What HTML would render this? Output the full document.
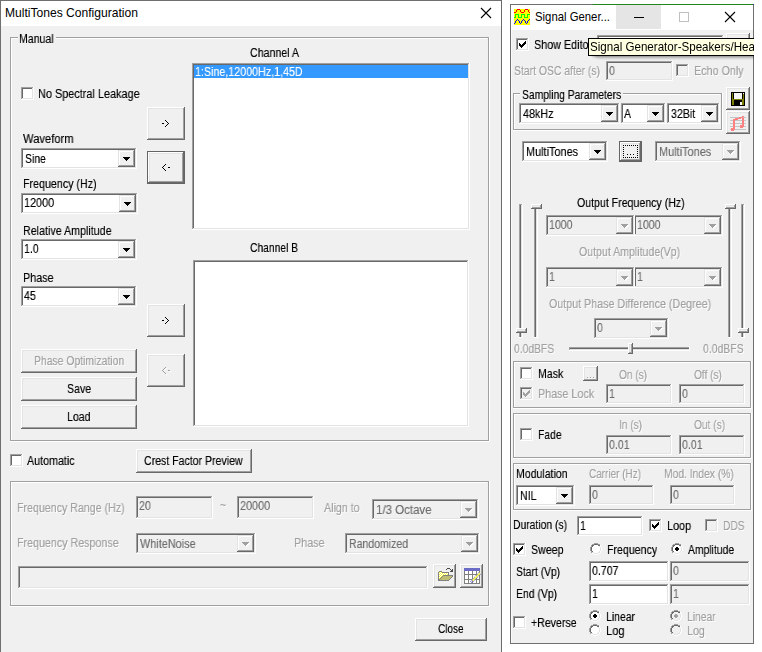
<!DOCTYPE html>
<html><head><meta charset="utf-8"><title>MultiTones Configuration</title>
<style>
html,body{margin:0;padding:0;background:#fff;}
body{width:762px;height:652px;overflow:hidden;position:relative;font-family:"Liberation Sans",sans-serif;}
#r{position:absolute;left:0;top:0;width:762px;height:652px;overflow:hidden;}
#r div,#r span,#r svg{position:absolute;}
#r span{white-space:pre;display:block;transform-origin:0 0;}
#r span.g{will-change:transform;}
</style></head><body><div id="r">
<div style="left:0px;top:0px;width:502px;height:652px;background:#f0f0f0;"></div>
<div style="left:0px;top:0px;width:502px;height:26px;background:#ffffff;"></div>
<div style="left:0px;top:0px;width:502px;height:1px;background:#707070;"></div>
<div style="left:0px;top:0px;width:1px;height:652px;background:#707070;"></div>
<div style="left:501px;top:0px;width:1px;height:652px;background:#6a6a6a;"></div>
<span style="left:5.00px;top:5px;line-height:15px;height:15px;font-size:13px;color:#000;transform:scaleX(0.9293);">MultiTones Configuration</span>
<svg style="left:480px;top:7px" width="12" height="12" viewBox="0 0 12 12"><path d="M1 1L11 11M11 1L1 11" stroke="#000" stroke-width="1.1" fill="none"/></svg>
<div style="left:10px;top:37px;width:1px;height:404px;background:#a0a0a0;"></div>
<div style="left:11px;top:38px;width:1px;height:402px;background:#ffffff;"></div>
<div style="left:10px;top:440px;width:479px;height:1px;background:#a0a0a0;"></div>
<div style="left:10px;top:441px;width:480px;height:1px;background:#ffffff;"></div>
<div style="left:488px;top:37px;width:1px;height:404px;background:#a0a0a0;"></div>
<div style="left:489px;top:37px;width:1px;height:405px;background:#ffffff;"></div>
<div style="left:10px;top:37px;width:8px;height:1px;background:#a0a0a0;"></div>
<div style="left:11px;top:38px;width:7px;height:1px;background:#ffffff;"></div>
<div style="left:56px;top:37px;width:433px;height:1px;background:#a0a0a0;"></div>
<div style="left:56px;top:38px;width:431px;height:1px;background:#ffffff;"></div>
<span class="g" style="left:19.40px;top:32px;line-height:14px;height:14px;font-size:12px;color:#000;transform:scaleX(0.8791);text-shadow:0 0 0 rgba(0,0,0,.5);">Manual</span>
<div style="left:23px;top:89px;width:9px;height:9px;background:#ffffff;"></div>
<div style="left:21px;top:87px;width:12px;height:1px;background:#a0a0a0;"></div>
<div style="left:21px;top:87px;width:1px;height:12px;background:#a0a0a0;"></div>
<div style="left:21px;top:99px;width:13px;height:1px;background:#ffffff;"></div>
<div style="left:33px;top:87px;width:1px;height:13px;background:#ffffff;"></div>
<div style="left:22px;top:88px;width:10px;height:1px;background:#696969;"></div>
<div style="left:22px;top:88px;width:1px;height:10px;background:#696969;"></div>
<div style="left:22px;top:98px;width:11px;height:1px;background:#e3e3e3;"></div>
<div style="left:32px;top:88px;width:1px;height:11px;background:#e3e3e3;"></div>
<span class="g" style="left:38.40px;top:87px;line-height:14px;height:14px;font-size:12px;color:#000;transform:scaleX(0.9068);text-shadow:0 0 0 rgba(0,0,0,.5);">No Spectral Leakage</span>
<span class="g" style="left:23.40px;top:132px;line-height:14px;height:14px;font-size:12px;color:#000;transform:scaleX(0.9330);text-shadow:0 0 0 rgba(0,0,0,.5);">Waveform</span>
<div style="left:23px;top:150px;width:112px;height:17px;background:#ffffff;"></div>
<div style="left:21px;top:148px;width:115px;height:1px;background:#a0a0a0;"></div>
<div style="left:21px;top:148px;width:1px;height:20px;background:#a0a0a0;"></div>
<div style="left:21px;top:168px;width:116px;height:1px;background:#ffffff;"></div>
<div style="left:136px;top:148px;width:1px;height:21px;background:#ffffff;"></div>
<div style="left:22px;top:149px;width:113px;height:1px;background:#696969;"></div>
<div style="left:22px;top:149px;width:1px;height:18px;background:#696969;"></div>
<div style="left:22px;top:167px;width:114px;height:1px;background:#e3e3e3;"></div>
<div style="left:135px;top:149px;width:1px;height:19px;background:#e3e3e3;"></div>
<div style="left:118px;top:150px;width:17px;height:17px;background:#f0f0f0;"></div>
<div style="left:118px;top:150px;width:16px;height:1px;background:#e3e3e3;"></div>
<div style="left:118px;top:150px;width:1px;height:16px;background:#e3e3e3;"></div>
<div style="left:118px;top:166px;width:17px;height:1px;background:#696969;"></div>
<div style="left:134px;top:150px;width:1px;height:17px;background:#696969;"></div>
<div style="left:119px;top:151px;width:14px;height:1px;background:#ffffff;"></div>
<div style="left:119px;top:151px;width:1px;height:14px;background:#ffffff;"></div>
<div style="left:119px;top:165px;width:15px;height:1px;background:#a0a0a0;"></div>
<div style="left:133px;top:151px;width:1px;height:15px;background:#a0a0a0;"></div>
<div style="left:123px;top:157px;width:7px;height:1px;background:#000;"></div>
<div style="left:124px;top:158px;width:5px;height:1px;background:#000;"></div>
<div style="left:125px;top:159px;width:3px;height:1px;background:#000;"></div>
<div style="left:126px;top:160px;width:1px;height:1px;background:#000;"></div>
<span class="g" style="left:25.40px;top:152px;line-height:14px;height:14px;font-size:12px;color:#000;transform:scaleX(0.8703);text-shadow:0 0 0 rgba(0,0,0,.5);">Sine</span>
<span class="g" style="left:23.40px;top:177px;line-height:14px;height:14px;font-size:12px;color:#000;transform:scaleX(0.8901);text-shadow:0 0 0 rgba(0,0,0,.5);">Frequency (Hz)</span>
<div style="left:23px;top:195px;width:113px;height:17px;background:#ffffff;"></div>
<div style="left:21px;top:193px;width:116px;height:1px;background:#a0a0a0;"></div>
<div style="left:21px;top:193px;width:1px;height:20px;background:#a0a0a0;"></div>
<div style="left:21px;top:213px;width:117px;height:1px;background:#ffffff;"></div>
<div style="left:137px;top:193px;width:1px;height:21px;background:#ffffff;"></div>
<div style="left:22px;top:194px;width:114px;height:1px;background:#696969;"></div>
<div style="left:22px;top:194px;width:1px;height:18px;background:#696969;"></div>
<div style="left:22px;top:212px;width:115px;height:1px;background:#e3e3e3;"></div>
<div style="left:136px;top:194px;width:1px;height:19px;background:#e3e3e3;"></div>
<div style="left:119px;top:195px;width:17px;height:17px;background:#f0f0f0;"></div>
<div style="left:119px;top:195px;width:16px;height:1px;background:#e3e3e3;"></div>
<div style="left:119px;top:195px;width:1px;height:16px;background:#e3e3e3;"></div>
<div style="left:119px;top:211px;width:17px;height:1px;background:#696969;"></div>
<div style="left:135px;top:195px;width:1px;height:17px;background:#696969;"></div>
<div style="left:120px;top:196px;width:14px;height:1px;background:#ffffff;"></div>
<div style="left:120px;top:196px;width:1px;height:14px;background:#ffffff;"></div>
<div style="left:120px;top:210px;width:15px;height:1px;background:#a0a0a0;"></div>
<div style="left:134px;top:196px;width:1px;height:15px;background:#a0a0a0;"></div>
<div style="left:124px;top:202px;width:7px;height:1px;background:#000;"></div>
<div style="left:125px;top:203px;width:5px;height:1px;background:#000;"></div>
<div style="left:126px;top:204px;width:3px;height:1px;background:#000;"></div>
<div style="left:127px;top:205px;width:1px;height:1px;background:#000;"></div>
<span class="g" style="left:24.40px;top:196px;line-height:14px;height:14px;font-size:12px;color:#000;transform:scaleX(0.9023);text-shadow:0 0 0 rgba(0,0,0,.5);">12000</span>
<span class="g" style="left:23.40px;top:224px;line-height:14px;height:14px;font-size:12px;color:#000;transform:scaleX(0.8914);text-shadow:0 0 0 rgba(0,0,0,.5);">Relative Amplitude</span>
<div style="left:23px;top:241px;width:112px;height:17px;background:#ffffff;"></div>
<div style="left:21px;top:239px;width:115px;height:1px;background:#a0a0a0;"></div>
<div style="left:21px;top:239px;width:1px;height:20px;background:#a0a0a0;"></div>
<div style="left:21px;top:259px;width:116px;height:1px;background:#ffffff;"></div>
<div style="left:136px;top:239px;width:1px;height:21px;background:#ffffff;"></div>
<div style="left:22px;top:240px;width:113px;height:1px;background:#696969;"></div>
<div style="left:22px;top:240px;width:1px;height:18px;background:#696969;"></div>
<div style="left:22px;top:258px;width:114px;height:1px;background:#e3e3e3;"></div>
<div style="left:135px;top:240px;width:1px;height:19px;background:#e3e3e3;"></div>
<div style="left:118px;top:241px;width:17px;height:17px;background:#f0f0f0;"></div>
<div style="left:118px;top:241px;width:16px;height:1px;background:#e3e3e3;"></div>
<div style="left:118px;top:241px;width:1px;height:16px;background:#e3e3e3;"></div>
<div style="left:118px;top:257px;width:17px;height:1px;background:#696969;"></div>
<div style="left:134px;top:241px;width:1px;height:17px;background:#696969;"></div>
<div style="left:119px;top:242px;width:14px;height:1px;background:#ffffff;"></div>
<div style="left:119px;top:242px;width:1px;height:14px;background:#ffffff;"></div>
<div style="left:119px;top:256px;width:15px;height:1px;background:#a0a0a0;"></div>
<div style="left:133px;top:242px;width:1px;height:15px;background:#a0a0a0;"></div>
<div style="left:123px;top:248px;width:7px;height:1px;background:#000;"></div>
<div style="left:124px;top:249px;width:5px;height:1px;background:#000;"></div>
<div style="left:125px;top:250px;width:3px;height:1px;background:#000;"></div>
<div style="left:126px;top:251px;width:1px;height:1px;background:#000;"></div>
<span class="g" style="left:24.40px;top:242px;line-height:14px;height:14px;font-size:12px;color:#000;transform:scaleX(0.8800);text-shadow:0 0 0 rgba(0,0,0,.5);">1.0</span>
<span class="g" style="left:23.40px;top:271px;line-height:14px;height:14px;font-size:12px;color:#000;transform:scaleX(0.8996);text-shadow:0 0 0 rgba(0,0,0,.5);">Phase</span>
<div style="left:23px;top:288px;width:112px;height:17px;background:#ffffff;"></div>
<div style="left:21px;top:286px;width:115px;height:1px;background:#a0a0a0;"></div>
<div style="left:21px;top:286px;width:1px;height:20px;background:#a0a0a0;"></div>
<div style="left:21px;top:306px;width:116px;height:1px;background:#ffffff;"></div>
<div style="left:136px;top:286px;width:1px;height:21px;background:#ffffff;"></div>
<div style="left:22px;top:287px;width:113px;height:1px;background:#696969;"></div>
<div style="left:22px;top:287px;width:1px;height:18px;background:#696969;"></div>
<div style="left:22px;top:305px;width:114px;height:1px;background:#e3e3e3;"></div>
<div style="left:135px;top:287px;width:1px;height:19px;background:#e3e3e3;"></div>
<div style="left:118px;top:288px;width:17px;height:17px;background:#f0f0f0;"></div>
<div style="left:118px;top:288px;width:16px;height:1px;background:#e3e3e3;"></div>
<div style="left:118px;top:288px;width:1px;height:16px;background:#e3e3e3;"></div>
<div style="left:118px;top:304px;width:17px;height:1px;background:#696969;"></div>
<div style="left:134px;top:288px;width:1px;height:17px;background:#696969;"></div>
<div style="left:119px;top:289px;width:14px;height:1px;background:#ffffff;"></div>
<div style="left:119px;top:289px;width:1px;height:14px;background:#ffffff;"></div>
<div style="left:119px;top:303px;width:15px;height:1px;background:#a0a0a0;"></div>
<div style="left:133px;top:289px;width:1px;height:15px;background:#a0a0a0;"></div>
<div style="left:123px;top:295px;width:7px;height:1px;background:#000;"></div>
<div style="left:124px;top:296px;width:5px;height:1px;background:#000;"></div>
<div style="left:125px;top:297px;width:3px;height:1px;background:#000;"></div>
<div style="left:126px;top:298px;width:1px;height:1px;background:#000;"></div>
<span class="g" style="left:24.40px;top:289px;line-height:14px;height:14px;font-size:12px;color:#000;transform:scaleX(0.8800);text-shadow:0 0 0 rgba(0,0,0,.5);">45</span>
<div style="left:147px;top:107px;width:38px;height:33px;background:#f0f0f0;"></div>
<div style="left:147px;top:107px;width:37px;height:1px;background:#ffffff;"></div>
<div style="left:147px;top:107px;width:1px;height:32px;background:#ffffff;"></div>
<div style="left:147px;top:139px;width:38px;height:1px;background:#696969;"></div>
<div style="left:184px;top:107px;width:1px;height:33px;background:#696969;"></div>
<div style="left:148px;top:108px;width:35px;height:1px;background:#e3e3e3;"></div>
<div style="left:148px;top:108px;width:1px;height:30px;background:#e3e3e3;"></div>
<div style="left:148px;top:138px;width:36px;height:1px;background:#a0a0a0;"></div>
<div style="left:183px;top:108px;width:1px;height:31px;background:#a0a0a0;"></div>
<svg style="left:162px;top:120px" width="7" height="7" viewBox="0 0 7 7" shape-rendering="crispEdges"><rect x="3" y="0" width="1" height="1" fill="#000"/><rect x="4" y="1" width="1" height="1" fill="#000"/><rect x="5" y="2" width="1" height="1" fill="#000"/><rect x="0" y="3" width="2" height="1" fill="#000"/><rect x="6" y="3" width="1" height="1" fill="#000"/><rect x="5" y="4" width="1" height="1" fill="#000"/><rect x="4" y="5" width="1" height="1" fill="#000"/><rect x="3" y="6" width="1" height="1" fill="#000"/></svg>
<div style="left:147px;top:151px;width:37px;height:1px;background:#646464;"></div>
<div style="left:147px;top:151px;width:1px;height:32px;background:#646464;"></div>
<div style="left:147px;top:183px;width:38px;height:1px;background:#646464;"></div>
<div style="left:184px;top:151px;width:1px;height:33px;background:#646464;"></div>
<div style="left:148px;top:152px;width:36px;height:31px;background:#f0f0f0;"></div>
<div style="left:148px;top:152px;width:35px;height:1px;background:#ffffff;"></div>
<div style="left:148px;top:152px;width:1px;height:30px;background:#ffffff;"></div>
<div style="left:148px;top:182px;width:36px;height:1px;background:#696969;"></div>
<div style="left:183px;top:152px;width:1px;height:31px;background:#696969;"></div>
<div style="left:149px;top:153px;width:33px;height:1px;background:#e3e3e3;"></div>
<div style="left:149px;top:153px;width:1px;height:28px;background:#e3e3e3;"></div>
<div style="left:149px;top:181px;width:34px;height:1px;background:#a0a0a0;"></div>
<div style="left:182px;top:153px;width:1px;height:29px;background:#a0a0a0;"></div>
<svg style="left:162px;top:164px" width="8" height="7" viewBox="0 0 8 7" shape-rendering="crispEdges"><rect x="3" y="0" width="1" height="1" fill="#000"/><rect x="2" y="1" width="1" height="1" fill="#000"/><rect x="1" y="2" width="1" height="1" fill="#000"/><rect x="0" y="3" width="1" height="1" fill="#000"/><rect x="6" y="3" width="2" height="1" fill="#000"/><rect x="1" y="4" width="1" height="1" fill="#000"/><rect x="2" y="5" width="1" height="1" fill="#000"/><rect x="3" y="6" width="1" height="1" fill="#000"/></svg>
<div style="left:147px;top:304px;width:38px;height:33px;background:#f0f0f0;"></div>
<div style="left:147px;top:304px;width:37px;height:1px;background:#ffffff;"></div>
<div style="left:147px;top:304px;width:1px;height:32px;background:#ffffff;"></div>
<div style="left:147px;top:336px;width:38px;height:1px;background:#696969;"></div>
<div style="left:184px;top:304px;width:1px;height:33px;background:#696969;"></div>
<div style="left:148px;top:305px;width:35px;height:1px;background:#e3e3e3;"></div>
<div style="left:148px;top:305px;width:1px;height:30px;background:#e3e3e3;"></div>
<div style="left:148px;top:335px;width:36px;height:1px;background:#a0a0a0;"></div>
<div style="left:183px;top:305px;width:1px;height:31px;background:#a0a0a0;"></div>
<svg style="left:162px;top:317px" width="7" height="7" viewBox="0 0 7 7" shape-rendering="crispEdges"><rect x="3" y="0" width="1" height="1" fill="#000"/><rect x="4" y="1" width="1" height="1" fill="#000"/><rect x="5" y="2" width="1" height="1" fill="#000"/><rect x="0" y="3" width="2" height="1" fill="#000"/><rect x="6" y="3" width="1" height="1" fill="#000"/><rect x="5" y="4" width="1" height="1" fill="#000"/><rect x="4" y="5" width="1" height="1" fill="#000"/><rect x="3" y="6" width="1" height="1" fill="#000"/></svg>
<div style="left:147px;top:354px;width:38px;height:33px;background:#f0f0f0;"></div>
<div style="left:147px;top:354px;width:37px;height:1px;background:#ffffff;"></div>
<div style="left:147px;top:354px;width:1px;height:32px;background:#ffffff;"></div>
<div style="left:147px;top:386px;width:38px;height:1px;background:#696969;"></div>
<div style="left:184px;top:354px;width:1px;height:33px;background:#696969;"></div>
<div style="left:148px;top:355px;width:35px;height:1px;background:#e3e3e3;"></div>
<div style="left:148px;top:355px;width:1px;height:30px;background:#e3e3e3;"></div>
<div style="left:148px;top:385px;width:36px;height:1px;background:#a0a0a0;"></div>
<div style="left:183px;top:355px;width:1px;height:31px;background:#a0a0a0;"></div>
<svg style="left:163px;top:368px" width="8" height="7" viewBox="0 0 8 7" shape-rendering="crispEdges"><rect x="3" y="0" width="1" height="1" fill="#ffffff"/><rect x="2" y="1" width="1" height="1" fill="#ffffff"/><rect x="1" y="2" width="1" height="1" fill="#ffffff"/><rect x="0" y="3" width="1" height="1" fill="#ffffff"/><rect x="6" y="3" width="2" height="1" fill="#ffffff"/><rect x="1" y="4" width="1" height="1" fill="#ffffff"/><rect x="2" y="5" width="1" height="1" fill="#ffffff"/><rect x="3" y="6" width="1" height="1" fill="#ffffff"/></svg>
<svg style="left:162px;top:367px" width="8" height="7" viewBox="0 0 8 7" shape-rendering="crispEdges"><rect x="3" y="0" width="1" height="1" fill="#a0a0a0"/><rect x="2" y="1" width="1" height="1" fill="#a0a0a0"/><rect x="1" y="2" width="1" height="1" fill="#a0a0a0"/><rect x="0" y="3" width="1" height="1" fill="#a0a0a0"/><rect x="6" y="3" width="2" height="1" fill="#a0a0a0"/><rect x="1" y="4" width="1" height="1" fill="#a0a0a0"/><rect x="2" y="5" width="1" height="1" fill="#a0a0a0"/><rect x="3" y="6" width="1" height="1" fill="#a0a0a0"/></svg>
<div style="left:21px;top:349px;width:116px;height:24px;background:#f0f0f0;"></div>
<div style="left:21px;top:349px;width:115px;height:1px;background:#ffffff;"></div>
<div style="left:21px;top:349px;width:1px;height:23px;background:#ffffff;"></div>
<div style="left:21px;top:372px;width:116px;height:1px;background:#696969;"></div>
<div style="left:136px;top:349px;width:1px;height:24px;background:#696969;"></div>
<div style="left:22px;top:350px;width:113px;height:1px;background:#e3e3e3;"></div>
<div style="left:22px;top:350px;width:1px;height:21px;background:#e3e3e3;"></div>
<div style="left:22px;top:371px;width:114px;height:1px;background:#a0a0a0;"></div>
<div style="left:135px;top:350px;width:1px;height:22px;background:#a0a0a0;"></div>
<span class="g" style="left:33.90px;top:354px;line-height:14px;height:14px;font-size:12px;color:#a0a0a0;transform:scaleX(0.8661);text-shadow:0 0 0 rgba(160,160,160,.5),1px 1px 0 #fff;">Phase Optimization</span>
<div style="left:21px;top:377px;width:116px;height:24px;background:#f0f0f0;"></div>
<div style="left:21px;top:377px;width:115px;height:1px;background:#ffffff;"></div>
<div style="left:21px;top:377px;width:1px;height:23px;background:#ffffff;"></div>
<div style="left:21px;top:400px;width:116px;height:1px;background:#696969;"></div>
<div style="left:136px;top:377px;width:1px;height:24px;background:#696969;"></div>
<div style="left:22px;top:378px;width:113px;height:1px;background:#e3e3e3;"></div>
<div style="left:22px;top:378px;width:1px;height:21px;background:#e3e3e3;"></div>
<div style="left:22px;top:399px;width:114px;height:1px;background:#a0a0a0;"></div>
<div style="left:135px;top:378px;width:1px;height:22px;background:#a0a0a0;"></div>
<span class="g" style="left:66.97px;top:382px;line-height:14px;height:14px;font-size:12px;color:#000;transform:scaleX(0.8800);text-shadow:0 0 0 rgba(0,0,0,.5);">Save</span>
<div style="left:21px;top:405px;width:116px;height:24px;background:#f0f0f0;"></div>
<div style="left:21px;top:405px;width:115px;height:1px;background:#ffffff;"></div>
<div style="left:21px;top:405px;width:1px;height:23px;background:#ffffff;"></div>
<div style="left:21px;top:428px;width:116px;height:1px;background:#696969;"></div>
<div style="left:136px;top:405px;width:1px;height:24px;background:#696969;"></div>
<div style="left:22px;top:406px;width:113px;height:1px;background:#e3e3e3;"></div>
<div style="left:22px;top:406px;width:1px;height:21px;background:#e3e3e3;"></div>
<div style="left:22px;top:427px;width:114px;height:1px;background:#a0a0a0;"></div>
<div style="left:135px;top:406px;width:1px;height:22px;background:#a0a0a0;"></div>
<span class="g" style="left:67.26px;top:410px;line-height:14px;height:14px;font-size:12px;color:#000;transform:scaleX(0.8800);text-shadow:0 0 0 rgba(0,0,0,.5);">Load</span>
<span class="g" style="left:249.90px;top:46px;line-height:14px;height:14px;font-size:12px;color:#000;transform:scaleX(0.8867);text-shadow:0 0 0 rgba(0,0,0,.5);">Channel A</span>
<div style="left:194px;top:65px;width:274px;height:163px;background:#ffffff;"></div>
<div style="left:192px;top:63px;width:277px;height:1px;background:#a0a0a0;"></div>
<div style="left:192px;top:63px;width:1px;height:166px;background:#a0a0a0;"></div>
<div style="left:192px;top:229px;width:278px;height:1px;background:#ffffff;"></div>
<div style="left:469px;top:63px;width:1px;height:167px;background:#ffffff;"></div>
<div style="left:193px;top:64px;width:275px;height:1px;background:#696969;"></div>
<div style="left:193px;top:64px;width:1px;height:164px;background:#696969;"></div>
<div style="left:193px;top:228px;width:276px;height:1px;background:#e3e3e3;"></div>
<div style="left:468px;top:64px;width:1px;height:165px;background:#e3e3e3;"></div>
<div style="left:194px;top:65px;width:274px;height:13px;background:#3399ff;"></div>
<span class="g" style="left:195.40px;top:65px;line-height:14px;height:14px;font-size:12px;color:#fff;transform:scaleX(0.8913);text-shadow:0 0 0 rgba(255,255,255,.5);">1:Sine,12000Hz,1,45D</span>
<span class="g" style="left:249.90px;top:241px;line-height:14px;height:14px;font-size:12px;color:#000;transform:scaleX(0.8584);text-shadow:0 0 0 rgba(0,0,0,.5);">Channel B</span>
<div style="left:195px;top:262px;width:272px;height:163px;background:#ffffff;"></div>
<div style="left:193px;top:260px;width:275px;height:1px;background:#a0a0a0;"></div>
<div style="left:193px;top:260px;width:1px;height:166px;background:#a0a0a0;"></div>
<div style="left:193px;top:426px;width:276px;height:1px;background:#ffffff;"></div>
<div style="left:468px;top:260px;width:1px;height:167px;background:#ffffff;"></div>
<div style="left:194px;top:261px;width:273px;height:1px;background:#696969;"></div>
<div style="left:194px;top:261px;width:1px;height:164px;background:#696969;"></div>
<div style="left:194px;top:425px;width:274px;height:1px;background:#e3e3e3;"></div>
<div style="left:467px;top:261px;width:1px;height:165px;background:#e3e3e3;"></div>
<div style="left:12px;top:456px;width:9px;height:9px;background:#ffffff;"></div>
<div style="left:10px;top:454px;width:12px;height:1px;background:#a0a0a0;"></div>
<div style="left:10px;top:454px;width:1px;height:12px;background:#a0a0a0;"></div>
<div style="left:10px;top:466px;width:13px;height:1px;background:#ffffff;"></div>
<div style="left:22px;top:454px;width:1px;height:13px;background:#ffffff;"></div>
<div style="left:11px;top:455px;width:10px;height:1px;background:#696969;"></div>
<div style="left:11px;top:455px;width:1px;height:10px;background:#696969;"></div>
<div style="left:11px;top:465px;width:11px;height:1px;background:#e3e3e3;"></div>
<div style="left:21px;top:455px;width:1px;height:11px;background:#e3e3e3;"></div>
<span class="g" style="left:27.40px;top:454px;line-height:14px;height:14px;font-size:12px;color:#000;transform:scaleX(0.8923);text-shadow:0 0 0 rgba(0,0,0,.5);">Automatic</span>
<div style="left:136px;top:449px;width:116px;height:24px;background:#f0f0f0;"></div>
<div style="left:136px;top:449px;width:115px;height:1px;background:#ffffff;"></div>
<div style="left:136px;top:449px;width:1px;height:23px;background:#ffffff;"></div>
<div style="left:136px;top:472px;width:116px;height:1px;background:#696969;"></div>
<div style="left:251px;top:449px;width:1px;height:24px;background:#696969;"></div>
<div style="left:137px;top:450px;width:113px;height:1px;background:#e3e3e3;"></div>
<div style="left:137px;top:450px;width:1px;height:21px;background:#e3e3e3;"></div>
<div style="left:137px;top:471px;width:114px;height:1px;background:#a0a0a0;"></div>
<div style="left:250px;top:450px;width:1px;height:22px;background:#a0a0a0;"></div>
<span class="g" style="left:144.40px;top:454px;line-height:14px;height:14px;font-size:12px;color:#000;transform:scaleX(0.8802);text-shadow:0 0 0 rgba(0,0,0,.5);">Crest Factor Preview</span>
<div style="left:10px;top:481px;width:1px;height:125px;background:#a0a0a0;"></div>
<div style="left:11px;top:482px;width:1px;height:123px;background:#ffffff;"></div>
<div style="left:10px;top:605px;width:479px;height:1px;background:#a0a0a0;"></div>
<div style="left:10px;top:606px;width:480px;height:1px;background:#ffffff;"></div>
<div style="left:488px;top:481px;width:1px;height:125px;background:#a0a0a0;"></div>
<div style="left:489px;top:481px;width:1px;height:126px;background:#ffffff;"></div>
<div style="left:10px;top:481px;width:479px;height:1px;background:#a0a0a0;"></div>
<div style="left:11px;top:482px;width:476px;height:1px;background:#ffffff;"></div>
<span class="g" style="left:17.40px;top:501px;line-height:14px;height:14px;font-size:12px;color:#a0a0a0;transform:scaleX(0.8865);text-shadow:0 0 0 rgba(160,160,160,.5),1px 1px 0 #fff;">Frequency Range (Hz)</span>
<div style="left:138px;top:498px;width:73px;height:19px;background:#f0f0f0;"></div>
<div style="left:136px;top:496px;width:76px;height:1px;background:#a0a0a0;"></div>
<div style="left:136px;top:496px;width:1px;height:22px;background:#a0a0a0;"></div>
<div style="left:136px;top:518px;width:77px;height:1px;background:#ffffff;"></div>
<div style="left:212px;top:496px;width:1px;height:23px;background:#ffffff;"></div>
<div style="left:137px;top:497px;width:74px;height:1px;background:#696969;"></div>
<div style="left:137px;top:497px;width:1px;height:20px;background:#696969;"></div>
<div style="left:137px;top:517px;width:75px;height:1px;background:#e3e3e3;"></div>
<div style="left:211px;top:497px;width:1px;height:21px;background:#e3e3e3;"></div>
<span class="g" style="left:139.40px;top:499px;line-height:14px;height:14px;font-size:12px;color:#6d6d6d;transform:scaleX(0.8800);text-shadow:0 0 0 rgba(109,109,109,.5);">20</span>
<span class="g" style="left:219.90px;top:498px;line-height:14px;height:14px;font-size:12px;color:#a0a0a0;transform:scaleX(0.8800);text-shadow:0 0 0 rgba(160,160,160,.5),1px 1px 0 #fff;">~</span>
<div style="left:239px;top:498px;width:73px;height:19px;background:#f0f0f0;"></div>
<div style="left:237px;top:496px;width:76px;height:1px;background:#a0a0a0;"></div>
<div style="left:237px;top:496px;width:1px;height:22px;background:#a0a0a0;"></div>
<div style="left:237px;top:518px;width:77px;height:1px;background:#ffffff;"></div>
<div style="left:313px;top:496px;width:1px;height:23px;background:#ffffff;"></div>
<div style="left:238px;top:497px;width:74px;height:1px;background:#696969;"></div>
<div style="left:238px;top:497px;width:1px;height:20px;background:#696969;"></div>
<div style="left:238px;top:517px;width:75px;height:1px;background:#e3e3e3;"></div>
<div style="left:312px;top:497px;width:1px;height:21px;background:#e3e3e3;"></div>
<span class="g" style="left:240.40px;top:499px;line-height:14px;height:14px;font-size:12px;color:#6d6d6d;transform:scaleX(0.9023);text-shadow:0 0 0 rgba(109,109,109,.5);">20000</span>
<span class="g" style="left:324.40px;top:501px;line-height:14px;height:14px;font-size:12px;color:#a0a0a0;transform:scaleX(0.8897);text-shadow:0 0 0 rgba(160,160,160,.5),1px 1px 0 #fff;">Align to</span>
<div style="left:374px;top:501px;width:103px;height:17px;background:#f0f0f0;"></div>
<div style="left:372px;top:499px;width:106px;height:1px;background:#a0a0a0;"></div>
<div style="left:372px;top:499px;width:1px;height:20px;background:#a0a0a0;"></div>
<div style="left:372px;top:519px;width:107px;height:1px;background:#ffffff;"></div>
<div style="left:478px;top:499px;width:1px;height:21px;background:#ffffff;"></div>
<div style="left:373px;top:500px;width:104px;height:1px;background:#696969;"></div>
<div style="left:373px;top:500px;width:1px;height:18px;background:#696969;"></div>
<div style="left:373px;top:518px;width:105px;height:1px;background:#e3e3e3;"></div>
<div style="left:477px;top:500px;width:1px;height:19px;background:#e3e3e3;"></div>
<div style="left:460px;top:501px;width:17px;height:17px;background:#f0f0f0;"></div>
<div style="left:460px;top:501px;width:16px;height:1px;background:#e3e3e3;"></div>
<div style="left:460px;top:501px;width:1px;height:16px;background:#e3e3e3;"></div>
<div style="left:460px;top:517px;width:17px;height:1px;background:#696969;"></div>
<div style="left:476px;top:501px;width:1px;height:17px;background:#696969;"></div>
<div style="left:461px;top:502px;width:14px;height:1px;background:#ffffff;"></div>
<div style="left:461px;top:502px;width:1px;height:14px;background:#ffffff;"></div>
<div style="left:461px;top:516px;width:15px;height:1px;background:#a0a0a0;"></div>
<div style="left:475px;top:502px;width:1px;height:15px;background:#a0a0a0;"></div>
<div style="left:466px;top:509px;width:7px;height:1px;background:#ffffff;"></div>
<div style="left:467px;top:510px;width:5px;height:1px;background:#ffffff;"></div>
<div style="left:468px;top:511px;width:3px;height:1px;background:#ffffff;"></div>
<div style="left:469px;top:512px;width:1px;height:1px;background:#ffffff;"></div>
<div style="left:465px;top:508px;width:7px;height:1px;background:#a0a0a0;"></div>
<div style="left:466px;top:509px;width:5px;height:1px;background:#a0a0a0;"></div>
<div style="left:467px;top:510px;width:3px;height:1px;background:#a0a0a0;"></div>
<div style="left:468px;top:511px;width:1px;height:1px;background:#a0a0a0;"></div>
<span class="g" style="left:375.90px;top:503px;line-height:14px;height:14px;font-size:12px;color:#6d6d6d;transform:scaleX(0.9586);text-shadow:0 0 0 rgba(109,109,109,.5);">1/3 Octave</span>
<span class="g" style="left:17.40px;top:536px;line-height:14px;height:14px;font-size:12px;color:#a0a0a0;transform:scaleX(0.8909);text-shadow:0 0 0 rgba(160,160,160,.5),1px 1px 0 #fff;">Frequency Response</span>
<div style="left:138px;top:535px;width:116px;height:17px;background:#f0f0f0;"></div>
<div style="left:136px;top:533px;width:119px;height:1px;background:#a0a0a0;"></div>
<div style="left:136px;top:533px;width:1px;height:20px;background:#a0a0a0;"></div>
<div style="left:136px;top:553px;width:120px;height:1px;background:#ffffff;"></div>
<div style="left:255px;top:533px;width:1px;height:21px;background:#ffffff;"></div>
<div style="left:137px;top:534px;width:117px;height:1px;background:#696969;"></div>
<div style="left:137px;top:534px;width:1px;height:18px;background:#696969;"></div>
<div style="left:137px;top:552px;width:118px;height:1px;background:#e3e3e3;"></div>
<div style="left:254px;top:534px;width:1px;height:19px;background:#e3e3e3;"></div>
<div style="left:237px;top:535px;width:17px;height:17px;background:#f0f0f0;"></div>
<div style="left:237px;top:535px;width:16px;height:1px;background:#e3e3e3;"></div>
<div style="left:237px;top:535px;width:1px;height:16px;background:#e3e3e3;"></div>
<div style="left:237px;top:551px;width:17px;height:1px;background:#696969;"></div>
<div style="left:253px;top:535px;width:1px;height:17px;background:#696969;"></div>
<div style="left:238px;top:536px;width:14px;height:1px;background:#ffffff;"></div>
<div style="left:238px;top:536px;width:1px;height:14px;background:#ffffff;"></div>
<div style="left:238px;top:550px;width:15px;height:1px;background:#a0a0a0;"></div>
<div style="left:252px;top:536px;width:1px;height:15px;background:#a0a0a0;"></div>
<div style="left:243px;top:543px;width:7px;height:1px;background:#ffffff;"></div>
<div style="left:244px;top:544px;width:5px;height:1px;background:#ffffff;"></div>
<div style="left:245px;top:545px;width:3px;height:1px;background:#ffffff;"></div>
<div style="left:246px;top:546px;width:1px;height:1px;background:#ffffff;"></div>
<div style="left:242px;top:542px;width:7px;height:1px;background:#a0a0a0;"></div>
<div style="left:243px;top:543px;width:5px;height:1px;background:#a0a0a0;"></div>
<div style="left:244px;top:544px;width:3px;height:1px;background:#a0a0a0;"></div>
<div style="left:245px;top:545px;width:1px;height:1px;background:#a0a0a0;"></div>
<span class="g" style="left:139.90px;top:537px;line-height:14px;height:14px;font-size:12px;color:#6d6d6d;transform:scaleX(0.9061);text-shadow:0 0 0 rgba(109,109,109,.5);">WhiteNoise</span>
<span class="g" style="left:294.40px;top:536px;line-height:14px;height:14px;font-size:12px;color:#a0a0a0;transform:scaleX(0.8996);text-shadow:0 0 0 rgba(160,160,160,.5),1px 1px 0 #fff;">Phase</span>
<div style="left:347px;top:535px;width:131px;height:17px;background:#f0f0f0;"></div>
<div style="left:345px;top:533px;width:134px;height:1px;background:#a0a0a0;"></div>
<div style="left:345px;top:533px;width:1px;height:20px;background:#a0a0a0;"></div>
<div style="left:345px;top:553px;width:135px;height:1px;background:#ffffff;"></div>
<div style="left:479px;top:533px;width:1px;height:21px;background:#ffffff;"></div>
<div style="left:346px;top:534px;width:132px;height:1px;background:#696969;"></div>
<div style="left:346px;top:534px;width:1px;height:18px;background:#696969;"></div>
<div style="left:346px;top:552px;width:133px;height:1px;background:#e3e3e3;"></div>
<div style="left:478px;top:534px;width:1px;height:19px;background:#e3e3e3;"></div>
<div style="left:461px;top:535px;width:17px;height:17px;background:#f0f0f0;"></div>
<div style="left:461px;top:535px;width:16px;height:1px;background:#e3e3e3;"></div>
<div style="left:461px;top:535px;width:1px;height:16px;background:#e3e3e3;"></div>
<div style="left:461px;top:551px;width:17px;height:1px;background:#696969;"></div>
<div style="left:477px;top:535px;width:1px;height:17px;background:#696969;"></div>
<div style="left:462px;top:536px;width:14px;height:1px;background:#ffffff;"></div>
<div style="left:462px;top:536px;width:1px;height:14px;background:#ffffff;"></div>
<div style="left:462px;top:550px;width:15px;height:1px;background:#a0a0a0;"></div>
<div style="left:476px;top:536px;width:1px;height:15px;background:#a0a0a0;"></div>
<div style="left:467px;top:543px;width:7px;height:1px;background:#ffffff;"></div>
<div style="left:468px;top:544px;width:5px;height:1px;background:#ffffff;"></div>
<div style="left:469px;top:545px;width:3px;height:1px;background:#ffffff;"></div>
<div style="left:470px;top:546px;width:1px;height:1px;background:#ffffff;"></div>
<div style="left:466px;top:542px;width:7px;height:1px;background:#a0a0a0;"></div>
<div style="left:467px;top:543px;width:5px;height:1px;background:#a0a0a0;"></div>
<div style="left:468px;top:544px;width:3px;height:1px;background:#a0a0a0;"></div>
<div style="left:469px;top:545px;width:1px;height:1px;background:#a0a0a0;"></div>
<span class="g" style="left:348.90px;top:537px;line-height:14px;height:14px;font-size:12px;color:#6d6d6d;transform:scaleX(0.8772);text-shadow:0 0 0 rgba(109,109,109,.5);">Randomized</span>
<div style="left:20px;top:568px;width:406px;height:19px;background:#f0f0f0;"></div>
<div style="left:18px;top:566px;width:409px;height:1px;background:#a0a0a0;"></div>
<div style="left:18px;top:566px;width:1px;height:22px;background:#a0a0a0;"></div>
<div style="left:18px;top:588px;width:410px;height:1px;background:#ffffff;"></div>
<div style="left:427px;top:566px;width:1px;height:23px;background:#ffffff;"></div>
<div style="left:19px;top:567px;width:407px;height:1px;background:#696969;"></div>
<div style="left:19px;top:567px;width:1px;height:20px;background:#696969;"></div>
<div style="left:19px;top:587px;width:408px;height:1px;background:#e3e3e3;"></div>
<div style="left:426px;top:567px;width:1px;height:21px;background:#e3e3e3;"></div>
<div style="left:433px;top:564px;width:23px;height:24px;background:#f0f0f0;"></div>
<div style="left:433px;top:564px;width:22px;height:1px;background:#ffffff;"></div>
<div style="left:433px;top:564px;width:1px;height:23px;background:#ffffff;"></div>
<div style="left:433px;top:587px;width:23px;height:1px;background:#696969;"></div>
<div style="left:455px;top:564px;width:1px;height:24px;background:#696969;"></div>
<div style="left:434px;top:565px;width:20px;height:1px;background:#e3e3e3;"></div>
<div style="left:434px;top:565px;width:1px;height:21px;background:#e3e3e3;"></div>
<div style="left:434px;top:586px;width:21px;height:1px;background:#a0a0a0;"></div>
<div style="left:454px;top:565px;width:1px;height:22px;background:#a0a0a0;"></div>
<div style="left:460px;top:564px;width:23px;height:24px;background:#f0f0f0;"></div>
<div style="left:460px;top:564px;width:22px;height:1px;background:#ffffff;"></div>
<div style="left:460px;top:564px;width:1px;height:23px;background:#ffffff;"></div>
<div style="left:460px;top:587px;width:23px;height:1px;background:#696969;"></div>
<div style="left:482px;top:564px;width:1px;height:24px;background:#696969;"></div>
<div style="left:461px;top:565px;width:20px;height:1px;background:#e3e3e3;"></div>
<div style="left:461px;top:565px;width:1px;height:21px;background:#e3e3e3;"></div>
<div style="left:461px;top:586px;width:21px;height:1px;background:#a0a0a0;"></div>
<div style="left:481px;top:565px;width:1px;height:22px;background:#a0a0a0;"></div>
<svg style="left:438px;top:567px" width="16" height="14" viewBox="0 0 16 14" shape-rendering="crispEdges"><rect x="9" y="1" width="3" height="1" fill="#4a4a4a"/><rect x="8" y="2" width="1" height="1" fill="#4a4a4a"/><rect x="12" y="2" width="1" height="1" fill="#4a4a4a"/><rect x="14" y="2" width="1" height="1" fill="#4a4a4a"/><rect x="13" y="3" width="2" height="1" fill="#4a4a4a"/><rect x="1" y="4" width="3" height="1" fill="#808080"/><rect x="12" y="4" width="3" height="1" fill="#4a4a4a"/><rect x="0" y="5" width="1" height="1" fill="#808080"/><rect x="1" y="5" width="1" height="1" fill="#ffff40"/><rect x="2" y="5" width="1" height="1" fill="#ffffff"/><rect x="3" y="5" width="1" height="1" fill="#ffff40"/><rect x="4" y="5" width="7" height="1" fill="#808080"/><rect x="0" y="6" width="1" height="1" fill="#808080"/><rect x="1" y="6" width="1" height="1" fill="#ffffff"/><rect x="2" y="6" width="1" height="1" fill="#ffff40"/><rect x="3" y="6" width="1" height="1" fill="#ffffff"/><rect x="4" y="6" width="1" height="1" fill="#ffff40"/><rect x="5" y="6" width="1" height="1" fill="#ffffff"/><rect x="6" y="6" width="1" height="1" fill="#ffff40"/><rect x="7" y="6" width="1" height="1" fill="#ffffff"/><rect x="8" y="6" width="1" height="1" fill="#ffff40"/><rect x="9" y="6" width="1" height="1" fill="#ffffff"/><rect x="10" y="6" width="1" height="1" fill="#808080"/><rect x="0" y="7" width="1" height="1" fill="#808080"/><rect x="1" y="7" width="1" height="1" fill="#ffff40"/><rect x="2" y="7" width="1" height="1" fill="#ffffff"/><rect x="3" y="7" width="1" height="1" fill="#ffff40"/><rect x="4" y="7" width="1" height="1" fill="#ffffff"/><rect x="5" y="7" width="1" height="1" fill="#ffff40"/><rect x="6" y="7" width="1" height="1" fill="#ffffff"/><rect x="7" y="7" width="1" height="1" fill="#ffff40"/><rect x="8" y="7" width="1" height="1" fill="#ffffff"/><rect x="9" y="7" width="1" height="1" fill="#ffff40"/><rect x="10" y="7" width="1" height="1" fill="#808080"/><rect x="0" y="8" width="1" height="1" fill="#808080"/><rect x="1" y="8" width="1" height="1" fill="#ffffff"/><rect x="2" y="8" width="1" height="1" fill="#ffff40"/><rect x="3" y="8" width="1" height="1" fill="#ffffff"/><rect x="4" y="8" width="1" height="1" fill="#ffff40"/><rect x="5" y="8" width="10" height="1" fill="#808080"/><rect x="0" y="9" width="1" height="1" fill="#808080"/><rect x="1" y="9" width="1" height="1" fill="#ffff40"/><rect x="2" y="9" width="1" height="1" fill="#ffffff"/><rect x="3" y="9" width="1" height="1" fill="#ffff40"/><rect x="4" y="9" width="1" height="1" fill="#808080"/><rect x="5" y="9" width="9" height="1" fill="#bdbd73"/><rect x="14" y="9" width="1" height="1" fill="#808080"/><rect x="0" y="10" width="1" height="1" fill="#808080"/><rect x="1" y="10" width="1" height="1" fill="#ffffff"/><rect x="2" y="10" width="1" height="1" fill="#ffff40"/><rect x="3" y="10" width="1" height="1" fill="#808080"/><rect x="4" y="10" width="9" height="1" fill="#bdbd73"/><rect x="13" y="10" width="1" height="1" fill="#808080"/><rect x="0" y="11" width="1" height="1" fill="#808080"/><rect x="1" y="11" width="1" height="1" fill="#ffff40"/><rect x="2" y="11" width="1" height="1" fill="#808080"/><rect x="3" y="11" width="9" height="1" fill="#bdbd73"/><rect x="12" y="11" width="1" height="1" fill="#808080"/><rect x="0" y="12" width="2" height="1" fill="#808080"/><rect x="2" y="12" width="9" height="1" fill="#bdbd73"/><rect x="11" y="12" width="1" height="1" fill="#808080"/><rect x="0" y="13" width="11" height="1" fill="#808080"/></svg>
<svg style="left:464px;top:568px" width="16" height="16" viewBox="0 0 16 16" shape-rendering="crispEdges"><rect x="0" y="0" width="16" height="1" fill="#6b6bc6"/><rect x="0" y="1" width="16" height="1" fill="#6b6bc6"/><rect x="0" y="2" width="16" height="1" fill="#6b6bc6"/><rect x="0" y="3" width="1" height="1" fill="#808080"/><rect x="1" y="3" width="3" height="1" fill="#ffffff"/><rect x="4" y="3" width="1" height="1" fill="#808080"/><rect x="5" y="3" width="3" height="1" fill="#ffffff"/><rect x="8" y="3" width="1" height="1" fill="#808080"/><rect x="9" y="3" width="3" height="1" fill="#ffffff"/><rect x="12" y="3" width="1" height="1" fill="#808080"/><rect x="13" y="3" width="2" height="1" fill="#ffffff"/><rect x="15" y="3" width="1" height="1" fill="#808080"/><rect x="0" y="4" width="1" height="1" fill="#808080"/><rect x="1" y="4" width="3" height="1" fill="#ffffff"/><rect x="4" y="4" width="1" height="1" fill="#808080"/><rect x="5" y="4" width="3" height="1" fill="#ffffff"/><rect x="8" y="4" width="1" height="1" fill="#808080"/><rect x="9" y="4" width="3" height="1" fill="#ffffff"/><rect x="12" y="4" width="1" height="1" fill="#808080"/><rect x="13" y="4" width="2" height="1" fill="#ffffff"/><rect x="15" y="4" width="1" height="1" fill="#808080"/><rect x="0" y="5" width="1" height="1" fill="#808080"/><rect x="1" y="5" width="3" height="1" fill="#ffffff"/><rect x="4" y="5" width="1" height="1" fill="#808080"/><rect x="5" y="5" width="3" height="1" fill="#ffffff"/><rect x="8" y="5" width="1" height="1" fill="#808080"/><rect x="9" y="5" width="3" height="1" fill="#ffffff"/><rect x="12" y="5" width="1" height="1" fill="#808080"/><rect x="13" y="5" width="2" height="1" fill="#ffffff"/><rect x="15" y="5" width="1" height="1" fill="#808080"/><rect x="0" y="6" width="16" height="1" fill="#808080"/><rect x="0" y="7" width="1" height="1" fill="#808080"/><rect x="1" y="7" width="3" height="1" fill="#ffffff"/><rect x="4" y="7" width="1" height="1" fill="#808080"/><rect x="5" y="7" width="3" height="1" fill="#ffffff"/><rect x="8" y="7" width="1" height="1" fill="#808080"/><rect x="9" y="7" width="3" height="1" fill="#ffffff"/><rect x="12" y="7" width="1" height="1" fill="#808080"/><rect x="13" y="7" width="2" height="1" fill="#ffffff"/><rect x="15" y="7" width="1" height="1" fill="#808080"/><rect x="0" y="8" width="1" height="1" fill="#808080"/><rect x="1" y="8" width="3" height="1" fill="#ffffff"/><rect x="4" y="8" width="1" height="1" fill="#808080"/><rect x="5" y="8" width="3" height="1" fill="#ffffff"/><rect x="8" y="8" width="1" height="1" fill="#808080"/><rect x="9" y="8" width="3" height="1" fill="#ffffff"/><rect x="12" y="8" width="1" height="1" fill="#808080"/><rect x="13" y="8" width="2" height="1" fill="#ffffff"/><rect x="15" y="8" width="1" height="1" fill="#808080"/><rect x="0" y="9" width="1" height="1" fill="#808080"/><rect x="1" y="9" width="3" height="1" fill="#ffffff"/><rect x="4" y="9" width="1" height="1" fill="#808080"/><rect x="5" y="9" width="3" height="1" fill="#ffffff"/><rect x="8" y="9" width="1" height="1" fill="#808080"/><rect x="9" y="9" width="3" height="1" fill="#ffffff"/><rect x="12" y="9" width="1" height="1" fill="#808080"/><rect x="13" y="9" width="2" height="1" fill="#ffffff"/><rect x="15" y="9" width="1" height="1" fill="#808080"/><rect x="0" y="10" width="1" height="1" fill="#808080"/><rect x="1" y="10" width="3" height="1" fill="#ffffff"/><rect x="4" y="10" width="1" height="1" fill="#808080"/><rect x="5" y="10" width="3" height="1" fill="#ffffff"/><rect x="8" y="10" width="1" height="1" fill="#808080"/><rect x="9" y="10" width="3" height="1" fill="#ffffff"/><rect x="12" y="10" width="1" height="1" fill="#808080"/><rect x="13" y="10" width="2" height="1" fill="#ffffff"/><rect x="15" y="10" width="1" height="1" fill="#808080"/><rect x="0" y="11" width="16" height="1" fill="#808080"/><rect x="0" y="12" width="1" height="1" fill="#808080"/><rect x="1" y="12" width="3" height="1" fill="#ffffff"/><rect x="4" y="12" width="1" height="1" fill="#808080"/><rect x="5" y="12" width="3" height="1" fill="#ffffff"/><rect x="8" y="12" width="1" height="1" fill="#808080"/><rect x="9" y="12" width="3" height="1" fill="#ffffff"/><rect x="12" y="12" width="1" height="1" fill="#808080"/><rect x="13" y="12" width="2" height="1" fill="#ffffff"/><rect x="15" y="12" width="1" height="1" fill="#808080"/><rect x="0" y="13" width="1" height="1" fill="#808080"/><rect x="1" y="13" width="3" height="1" fill="#ffffff"/><rect x="4" y="13" width="1" height="1" fill="#808080"/><rect x="5" y="13" width="3" height="1" fill="#ffffff"/><rect x="8" y="13" width="1" height="1" fill="#808080"/><rect x="9" y="13" width="3" height="1" fill="#ffffff"/><rect x="12" y="13" width="1" height="1" fill="#808080"/><rect x="13" y="13" width="2" height="1" fill="#ffffff"/><rect x="15" y="13" width="1" height="1" fill="#808080"/><rect x="0" y="14" width="1" height="1" fill="#808080"/><rect x="1" y="14" width="3" height="1" fill="#ffffff"/><rect x="4" y="14" width="1" height="1" fill="#808080"/><rect x="5" y="14" width="3" height="1" fill="#ffffff"/><rect x="8" y="14" width="1" height="1" fill="#808080"/><rect x="9" y="14" width="3" height="1" fill="#ffffff"/><rect x="12" y="14" width="1" height="1" fill="#808080"/><rect x="13" y="14" width="2" height="1" fill="#ffffff"/><rect x="15" y="14" width="1" height="1" fill="#808080"/><rect x="0" y="15" width="16" height="1" fill="#808080"/></svg>
<svg style="left:464px;top:568px" width="17" height="16" viewBox="0 0 17 16"><path d="M15.8 5.2L7 14.2" stroke="#6060d0" stroke-width="3" stroke-dasharray="1 1" fill="none"/><path d="M16 5L8.6 12.6" stroke="#ffff50" stroke-width="1.7" fill="none"/></svg>
<div style="left:415px;top:618px;width:72px;height:23px;background:#f0f0f0;"></div>
<div style="left:415px;top:618px;width:71px;height:1px;background:#ffffff;"></div>
<div style="left:415px;top:618px;width:1px;height:22px;background:#ffffff;"></div>
<div style="left:415px;top:640px;width:72px;height:1px;background:#696969;"></div>
<div style="left:486px;top:618px;width:1px;height:23px;background:#696969;"></div>
<div style="left:416px;top:619px;width:69px;height:1px;background:#e3e3e3;"></div>
<div style="left:416px;top:619px;width:1px;height:20px;background:#e3e3e3;"></div>
<div style="left:416px;top:639px;width:70px;height:1px;background:#a0a0a0;"></div>
<div style="left:485px;top:619px;width:1px;height:21px;background:#a0a0a0;"></div>
<span class="g" style="left:438.40px;top:622px;line-height:14px;height:14px;font-size:12px;color:#000;transform:scaleX(0.8342);text-shadow:0 0 0 rgba(0,0,0,.5);">Close</span>
<div style="left:502px;top:0px;width:260px;height:652px;background:#ffffff;"></div>
<div style="left:510px;top:4px;width:244px;height:640px;background:#f0f0f0;"></div>
<div style="left:510px;top:4px;width:244px;height:26px;background:#ffffff;"></div>
<div style="left:616px;top:5px;width:45px;height:24px;background:#e5e5e5;"></div>
<div style="left:511px;top:30px;width:1px;height:613px;background:#fafafa;"></div>
<div style="left:510px;top:4px;width:243px;height:1px;background:#6f6f6f;"></div>
<div style="left:510px;top:4px;width:1px;height:639px;background:#6f6f6f;"></div>
<div style="left:510px;top:643px;width:244px;height:1px;background:#6f6f6f;"></div>
<div style="left:753px;top:4px;width:1px;height:640px;background:#6f6f6f;"></div>
<div style="left:593px;top:4px;width:160px;height:1px;background:#22861f;"></div>
<div style="left:753px;top:4px;width:1px;height:1px;background:#3030a0;"></div>
<span style="left:535.00px;top:9px;line-height:15px;height:15px;font-size:13px;color:#000;transform:scaleX(0.8719);">Signal Gener...</span>
<svg style="left:514px;top:9px" width="16" height="16" viewBox="0 0 16 16" shape-rendering="crispEdges"><rect x="0" y="0" width="3" height="1" fill="#ffff00"/><rect x="3" y="0" width="3" height="1" fill="#ff0000"/><rect x="6" y="0" width="5" height="1" fill="#ffff00"/><rect x="11" y="0" width="3" height="1" fill="#ff0000"/><rect x="14" y="0" width="2" height="1" fill="#ffff00"/><rect x="0" y="1" width="2" height="1" fill="#ffff00"/><rect x="2" y="1" width="1" height="1" fill="#ff0000"/><rect x="3" y="1" width="3" height="1" fill="#ffff00"/><rect x="6" y="1" width="1" height="1" fill="#ff0000"/><rect x="7" y="1" width="3" height="1" fill="#ffff00"/><rect x="10" y="1" width="1" height="1" fill="#ff0000"/><rect x="11" y="1" width="3" height="1" fill="#ffff00"/><rect x="14" y="1" width="1" height="1" fill="#ff0000"/><rect x="15" y="1" width="1" height="1" fill="#ffff00"/><rect x="0" y="2" width="2" height="1" fill="#ffff00"/><rect x="2" y="2" width="1" height="1" fill="#ff0000"/><rect x="3" y="2" width="3" height="1" fill="#ffff00"/><rect x="6" y="2" width="1" height="1" fill="#ff0000"/><rect x="7" y="2" width="3" height="1" fill="#ffff00"/><rect x="10" y="2" width="1" height="1" fill="#ff0000"/><rect x="11" y="2" width="3" height="1" fill="#ffff00"/><rect x="14" y="2" width="1" height="1" fill="#ff0000"/><rect x="15" y="2" width="1" height="1" fill="#ffff00"/><rect x="0" y="3" width="2" height="1" fill="#ff0000"/><rect x="2" y="3" width="5" height="1" fill="#ffff00"/><rect x="7" y="3" width="3" height="1" fill="#ff0000"/><rect x="10" y="3" width="5" height="1" fill="#ffff00"/><rect x="15" y="3" width="1" height="1" fill="#ff0000"/><rect x="0" y="4" width="16" height="1" fill="#ffff00"/><rect x="0" y="5" width="1" height="1" fill="#ffff00"/><rect x="1" y="5" width="4" height="1" fill="#00ff00"/><rect x="5" y="5" width="2" height="1" fill="#ffff00"/><rect x="7" y="5" width="4" height="1" fill="#00ff00"/><rect x="11" y="5" width="2" height="1" fill="#ffff00"/><rect x="13" y="5" width="3" height="1" fill="#00ff00"/><rect x="0" y="6" width="1" height="1" fill="#ffff00"/><rect x="1" y="6" width="1" height="1" fill="#00ff00"/><rect x="2" y="6" width="2" height="1" fill="#ffff00"/><rect x="4" y="6" width="1" height="1" fill="#00ff00"/><rect x="5" y="6" width="2" height="1" fill="#ffff00"/><rect x="7" y="6" width="1" height="1" fill="#00ff00"/><rect x="8" y="6" width="2" height="1" fill="#ffff00"/><rect x="10" y="6" width="1" height="1" fill="#00ff00"/><rect x="11" y="6" width="2" height="1" fill="#ffff00"/><rect x="13" y="6" width="1" height="1" fill="#00ff00"/><rect x="14" y="6" width="2" height="1" fill="#ffff00"/><rect x="0" y="7" width="1" height="1" fill="#ffff00"/><rect x="1" y="7" width="1" height="1" fill="#00ff00"/><rect x="2" y="7" width="2" height="1" fill="#ffff00"/><rect x="4" y="7" width="1" height="1" fill="#00ff00"/><rect x="5" y="7" width="2" height="1" fill="#ffff00"/><rect x="7" y="7" width="1" height="1" fill="#00ff00"/><rect x="8" y="7" width="2" height="1" fill="#ffff00"/><rect x="10" y="7" width="1" height="1" fill="#00ff00"/><rect x="11" y="7" width="2" height="1" fill="#ffff00"/><rect x="13" y="7" width="1" height="1" fill="#00ff00"/><rect x="14" y="7" width="2" height="1" fill="#ffff00"/><rect x="0" y="8" width="2" height="1" fill="#00ff00"/><rect x="2" y="8" width="2" height="1" fill="#ffff00"/><rect x="4" y="8" width="4" height="1" fill="#00ff00"/><rect x="8" y="8" width="2" height="1" fill="#ffff00"/><rect x="10" y="8" width="4" height="1" fill="#00ff00"/><rect x="14" y="8" width="2" height="1" fill="#ffff00"/><rect x="0" y="9" width="16" height="1" fill="#ffff00"/><rect x="0" y="10" width="3" height="1" fill="#ffff00"/><rect x="3" y="10" width="1" height="1" fill="#0000ff"/><rect x="4" y="10" width="5" height="1" fill="#ffff00"/><rect x="9" y="10" width="1" height="1" fill="#0000ff"/><rect x="10" y="10" width="5" height="1" fill="#ffff00"/><rect x="15" y="10" width="1" height="1" fill="#0000ff"/><rect x="0" y="11" width="2" height="1" fill="#ffff00"/><rect x="2" y="11" width="1" height="1" fill="#0000ff"/><rect x="3" y="11" width="1" height="1" fill="#ffff00"/><rect x="4" y="11" width="1" height="1" fill="#0000ff"/><rect x="5" y="11" width="3" height="1" fill="#ffff00"/><rect x="8" y="11" width="1" height="1" fill="#0000ff"/><rect x="9" y="11" width="1" height="1" fill="#ffff00"/><rect x="10" y="11" width="1" height="1" fill="#0000ff"/><rect x="11" y="11" width="3" height="1" fill="#ffff00"/><rect x="14" y="11" width="1" height="1" fill="#0000ff"/><rect x="15" y="11" width="1" height="1" fill="#ffff00"/><rect x="0" y="12" width="1" height="1" fill="#ffff00"/><rect x="1" y="12" width="1" height="1" fill="#0000ff"/><rect x="2" y="12" width="3" height="1" fill="#ffff00"/><rect x="5" y="12" width="1" height="1" fill="#0000ff"/><rect x="6" y="12" width="1" height="1" fill="#ffff00"/><rect x="7" y="12" width="1" height="1" fill="#0000ff"/><rect x="8" y="12" width="3" height="1" fill="#ffff00"/><rect x="11" y="12" width="1" height="1" fill="#0000ff"/><rect x="12" y="12" width="1" height="1" fill="#ffff00"/><rect x="13" y="12" width="1" height="1" fill="#0000ff"/><rect x="14" y="12" width="2" height="1" fill="#ffff00"/><rect x="0" y="13" width="1" height="1" fill="#ffff00"/><rect x="1" y="13" width="1" height="1" fill="#0000ff"/><rect x="2" y="13" width="3" height="1" fill="#ffff00"/><rect x="5" y="13" width="1" height="1" fill="#0000ff"/><rect x="6" y="13" width="1" height="1" fill="#ffff00"/><rect x="7" y="13" width="1" height="1" fill="#0000ff"/><rect x="8" y="13" width="3" height="1" fill="#ffff00"/><rect x="11" y="13" width="1" height="1" fill="#0000ff"/><rect x="12" y="13" width="1" height="1" fill="#ffff00"/><rect x="13" y="13" width="1" height="1" fill="#0000ff"/><rect x="14" y="13" width="2" height="1" fill="#ffff00"/><rect x="0" y="14" width="1" height="1" fill="#0000ff"/><rect x="1" y="14" width="5" height="1" fill="#ffff00"/><rect x="6" y="14" width="1" height="1" fill="#0000ff"/><rect x="7" y="14" width="5" height="1" fill="#ffff00"/><rect x="12" y="14" width="1" height="1" fill="#0000ff"/><rect x="13" y="14" width="3" height="1" fill="#ffff00"/><rect x="0" y="15" width="16" height="1" fill="#ffff00"/></svg>
<div style="left:634px;top:17px;width:10px;height:1px;background:#000;"></div>
<div style="left:679px;top:12px;width:9px;height:1px;background:#c0c0c0;"></div>
<div style="left:679px;top:12px;width:1px;height:9px;background:#c0c0c0;"></div>
<div style="left:679px;top:21px;width:10px;height:1px;background:#c0c0c0;"></div>
<div style="left:688px;top:12px;width:1px;height:10px;background:#c0c0c0;"></div>
<svg style="left:724px;top:11px" width="12" height="12" viewBox="0 0 12 12"><path d="M1 1L11 11M11 1L1 11" stroke="#000" stroke-width="1.1" fill="none"/></svg>
<div style="left:599px;top:37px;width:123px;height:16px;background:#ffffff;"></div>
<div style="left:597px;top:35px;width:126px;height:1px;background:#a0a0a0;"></div>
<div style="left:597px;top:35px;width:1px;height:19px;background:#a0a0a0;"></div>
<div style="left:597px;top:54px;width:127px;height:1px;background:#ffffff;"></div>
<div style="left:723px;top:35px;width:1px;height:20px;background:#ffffff;"></div>
<div style="left:598px;top:36px;width:124px;height:1px;background:#696969;"></div>
<div style="left:598px;top:36px;width:1px;height:17px;background:#696969;"></div>
<div style="left:598px;top:53px;width:125px;height:1px;background:#e3e3e3;"></div>
<div style="left:722px;top:36px;width:1px;height:18px;background:#e3e3e3;"></div>
<div style="left:726px;top:33px;width:24px;height:22px;background:#f0f0f0;"></div>
<div style="left:726px;top:33px;width:23px;height:1px;background:#ffffff;"></div>
<div style="left:726px;top:33px;width:1px;height:21px;background:#ffffff;"></div>
<div style="left:726px;top:54px;width:24px;height:1px;background:#696969;"></div>
<div style="left:749px;top:33px;width:1px;height:22px;background:#696969;"></div>
<div style="left:727px;top:34px;width:21px;height:1px;background:#e3e3e3;"></div>
<div style="left:727px;top:34px;width:1px;height:19px;background:#e3e3e3;"></div>
<div style="left:727px;top:53px;width:22px;height:1px;background:#a0a0a0;"></div>
<div style="left:748px;top:34px;width:1px;height:20px;background:#a0a0a0;"></div>
<div style="left:518px;top:40px;width:9px;height:9px;background:#ffffff;"></div>
<div style="left:516px;top:38px;width:12px;height:1px;background:#a0a0a0;"></div>
<div style="left:516px;top:38px;width:1px;height:12px;background:#a0a0a0;"></div>
<div style="left:516px;top:50px;width:13px;height:1px;background:#ffffff;"></div>
<div style="left:528px;top:38px;width:1px;height:13px;background:#ffffff;"></div>
<div style="left:517px;top:39px;width:10px;height:1px;background:#696969;"></div>
<div style="left:517px;top:39px;width:1px;height:10px;background:#696969;"></div>
<div style="left:517px;top:49px;width:11px;height:1px;background:#e3e3e3;"></div>
<div style="left:527px;top:39px;width:1px;height:11px;background:#e3e3e3;"></div>
<div style="left:519px;top:43px;width:1px;height:3px;background:#000;"></div>
<div style="left:520px;top:44px;width:1px;height:3px;background:#000;"></div>
<div style="left:521px;top:45px;width:1px;height:3px;background:#000;"></div>
<div style="left:522px;top:44px;width:1px;height:3px;background:#000;"></div>
<div style="left:523px;top:43px;width:1px;height:3px;background:#000;"></div>
<div style="left:524px;top:42px;width:1px;height:3px;background:#000;"></div>
<div style="left:525px;top:41px;width:1px;height:3px;background:#000;"></div>
<span class="g" style="left:533.90px;top:38px;line-height:14px;height:14px;font-size:12px;color:#000;transform:scaleX(0.8982);text-shadow:0 0 0 rgba(0,0,0,.5);">Show Editor</span>
<span class="g" style="left:513.90px;top:64px;line-height:14px;height:14px;font-size:12px;color:#a0a0a0;transform:scaleX(0.8670);text-shadow:0 0 0 rgba(160,160,160,.5),1px 1px 0 #fff;">Start OSC after (s)</span>
<div style="left:608px;top:63px;width:63px;height:16px;background:#f0f0f0;"></div>
<div style="left:606px;top:61px;width:66px;height:1px;background:#a0a0a0;"></div>
<div style="left:606px;top:61px;width:1px;height:19px;background:#a0a0a0;"></div>
<div style="left:606px;top:80px;width:67px;height:1px;background:#ffffff;"></div>
<div style="left:672px;top:61px;width:1px;height:20px;background:#ffffff;"></div>
<div style="left:607px;top:62px;width:64px;height:1px;background:#696969;"></div>
<div style="left:607px;top:62px;width:1px;height:17px;background:#696969;"></div>
<div style="left:607px;top:79px;width:65px;height:1px;background:#e3e3e3;"></div>
<div style="left:671px;top:62px;width:1px;height:18px;background:#e3e3e3;"></div>
<span class="g" style="left:609.40px;top:64px;line-height:14px;height:14px;font-size:12px;color:#6d6d6d;transform:scaleX(0.8800);text-shadow:0 0 0 rgba(109,109,109,.5);">0</span>
<div style="left:678px;top:66px;width:9px;height:9px;background:#f0f0f0;"></div>
<div style="left:676px;top:64px;width:12px;height:1px;background:#a0a0a0;"></div>
<div style="left:676px;top:64px;width:1px;height:12px;background:#a0a0a0;"></div>
<div style="left:676px;top:76px;width:13px;height:1px;background:#ffffff;"></div>
<div style="left:688px;top:64px;width:1px;height:13px;background:#ffffff;"></div>
<div style="left:677px;top:65px;width:10px;height:1px;background:#696969;"></div>
<div style="left:677px;top:65px;width:1px;height:10px;background:#696969;"></div>
<div style="left:677px;top:75px;width:11px;height:1px;background:#e3e3e3;"></div>
<div style="left:687px;top:65px;width:1px;height:11px;background:#e3e3e3;"></div>
<span class="g" style="left:693.90px;top:64px;line-height:14px;height:14px;font-size:12px;color:#a0a0a0;transform:scaleX(0.8962);text-shadow:0 0 0 rgba(160,160,160,.5),1px 1px 0 #fff;">Echo Only</span>
<div style="left:513px;top:93px;width:1px;height:37px;background:#a0a0a0;"></div>
<div style="left:514px;top:94px;width:1px;height:35px;background:#ffffff;"></div>
<div style="left:513px;top:129px;width:209px;height:1px;background:#a0a0a0;"></div>
<div style="left:513px;top:130px;width:210px;height:1px;background:#ffffff;"></div>
<div style="left:721px;top:93px;width:1px;height:37px;background:#a0a0a0;"></div>
<div style="left:722px;top:93px;width:1px;height:38px;background:#ffffff;"></div>
<div style="left:513px;top:93px;width:7px;height:1px;background:#a0a0a0;"></div>
<div style="left:514px;top:94px;width:6px;height:1px;background:#ffffff;"></div>
<div style="left:623px;top:93px;width:99px;height:1px;background:#a0a0a0;"></div>
<div style="left:623px;top:94px;width:97px;height:1px;background:#ffffff;"></div>
<span class="g" style="left:521.90px;top:88px;line-height:14px;height:14px;font-size:12px;color:#000;transform:scaleX(0.8589);text-shadow:0 0 0 rgba(0,0,0,.5);">Sampling Parameters</span>
<div style="left:521px;top:105px;width:97px;height:17px;background:#ffffff;"></div>
<div style="left:519px;top:103px;width:100px;height:1px;background:#a0a0a0;"></div>
<div style="left:519px;top:103px;width:1px;height:20px;background:#a0a0a0;"></div>
<div style="left:519px;top:123px;width:101px;height:1px;background:#ffffff;"></div>
<div style="left:619px;top:103px;width:1px;height:21px;background:#ffffff;"></div>
<div style="left:520px;top:104px;width:98px;height:1px;background:#696969;"></div>
<div style="left:520px;top:104px;width:1px;height:18px;background:#696969;"></div>
<div style="left:520px;top:122px;width:99px;height:1px;background:#e3e3e3;"></div>
<div style="left:618px;top:104px;width:1px;height:19px;background:#e3e3e3;"></div>
<div style="left:601px;top:105px;width:17px;height:17px;background:#f0f0f0;"></div>
<div style="left:601px;top:105px;width:16px;height:1px;background:#e3e3e3;"></div>
<div style="left:601px;top:105px;width:1px;height:16px;background:#e3e3e3;"></div>
<div style="left:601px;top:121px;width:17px;height:1px;background:#696969;"></div>
<div style="left:617px;top:105px;width:1px;height:17px;background:#696969;"></div>
<div style="left:602px;top:106px;width:14px;height:1px;background:#ffffff;"></div>
<div style="left:602px;top:106px;width:1px;height:14px;background:#ffffff;"></div>
<div style="left:602px;top:120px;width:15px;height:1px;background:#a0a0a0;"></div>
<div style="left:616px;top:106px;width:1px;height:15px;background:#a0a0a0;"></div>
<div style="left:606px;top:112px;width:7px;height:1px;background:#000;"></div>
<div style="left:607px;top:113px;width:5px;height:1px;background:#000;"></div>
<div style="left:608px;top:114px;width:3px;height:1px;background:#000;"></div>
<div style="left:609px;top:115px;width:1px;height:1px;background:#000;"></div>
<span class="g" style="left:523.40px;top:107px;line-height:14px;height:14px;font-size:12px;color:#000;transform:scaleX(0.8996);text-shadow:0 0 0 rgba(0,0,0,.5);">48kHz</span>
<div style="left:623px;top:105px;width:41px;height:17px;background:#ffffff;"></div>
<div style="left:621px;top:103px;width:44px;height:1px;background:#a0a0a0;"></div>
<div style="left:621px;top:103px;width:1px;height:20px;background:#a0a0a0;"></div>
<div style="left:621px;top:123px;width:45px;height:1px;background:#ffffff;"></div>
<div style="left:665px;top:103px;width:1px;height:21px;background:#ffffff;"></div>
<div style="left:622px;top:104px;width:42px;height:1px;background:#696969;"></div>
<div style="left:622px;top:104px;width:1px;height:18px;background:#696969;"></div>
<div style="left:622px;top:122px;width:43px;height:1px;background:#e3e3e3;"></div>
<div style="left:664px;top:104px;width:1px;height:19px;background:#e3e3e3;"></div>
<div style="left:647px;top:105px;width:17px;height:17px;background:#f0f0f0;"></div>
<div style="left:647px;top:105px;width:16px;height:1px;background:#e3e3e3;"></div>
<div style="left:647px;top:105px;width:1px;height:16px;background:#e3e3e3;"></div>
<div style="left:647px;top:121px;width:17px;height:1px;background:#696969;"></div>
<div style="left:663px;top:105px;width:1px;height:17px;background:#696969;"></div>
<div style="left:648px;top:106px;width:14px;height:1px;background:#ffffff;"></div>
<div style="left:648px;top:106px;width:1px;height:14px;background:#ffffff;"></div>
<div style="left:648px;top:120px;width:15px;height:1px;background:#a0a0a0;"></div>
<div style="left:662px;top:106px;width:1px;height:15px;background:#a0a0a0;"></div>
<div style="left:652px;top:112px;width:7px;height:1px;background:#000;"></div>
<div style="left:653px;top:113px;width:5px;height:1px;background:#000;"></div>
<div style="left:654px;top:114px;width:3px;height:1px;background:#000;"></div>
<div style="left:655px;top:115px;width:1px;height:1px;background:#000;"></div>
<span class="g" style="left:624.40px;top:107px;line-height:14px;height:14px;font-size:12px;color:#000;transform:scaleX(0.8800);text-shadow:0 0 0 rgba(0,0,0,.5);">A</span>
<div style="left:669px;top:105px;width:49px;height:17px;background:#ffffff;"></div>
<div style="left:667px;top:103px;width:52px;height:1px;background:#a0a0a0;"></div>
<div style="left:667px;top:103px;width:1px;height:20px;background:#a0a0a0;"></div>
<div style="left:667px;top:123px;width:53px;height:1px;background:#ffffff;"></div>
<div style="left:719px;top:103px;width:1px;height:21px;background:#ffffff;"></div>
<div style="left:668px;top:104px;width:50px;height:1px;background:#696969;"></div>
<div style="left:668px;top:104px;width:1px;height:18px;background:#696969;"></div>
<div style="left:668px;top:122px;width:51px;height:1px;background:#e3e3e3;"></div>
<div style="left:718px;top:104px;width:1px;height:19px;background:#e3e3e3;"></div>
<div style="left:701px;top:105px;width:17px;height:17px;background:#f0f0f0;"></div>
<div style="left:701px;top:105px;width:16px;height:1px;background:#e3e3e3;"></div>
<div style="left:701px;top:105px;width:1px;height:16px;background:#e3e3e3;"></div>
<div style="left:701px;top:121px;width:17px;height:1px;background:#696969;"></div>
<div style="left:717px;top:105px;width:1px;height:17px;background:#696969;"></div>
<div style="left:702px;top:106px;width:14px;height:1px;background:#ffffff;"></div>
<div style="left:702px;top:106px;width:1px;height:14px;background:#ffffff;"></div>
<div style="left:702px;top:120px;width:15px;height:1px;background:#a0a0a0;"></div>
<div style="left:716px;top:106px;width:1px;height:15px;background:#a0a0a0;"></div>
<div style="left:706px;top:112px;width:7px;height:1px;background:#000;"></div>
<div style="left:707px;top:113px;width:5px;height:1px;background:#000;"></div>
<div style="left:708px;top:114px;width:3px;height:1px;background:#000;"></div>
<div style="left:709px;top:115px;width:1px;height:1px;background:#000;"></div>
<span class="g" style="left:670.90px;top:107px;line-height:14px;height:14px;font-size:12px;color:#000;transform:scaleX(0.8887);text-shadow:0 0 0 rgba(0,0,0,.5);">32Bit</span>
<div style="left:726px;top:87px;width:24px;height:23px;background:#f0f0f0;"></div>
<div style="left:726px;top:87px;width:23px;height:1px;background:#ffffff;"></div>
<div style="left:726px;top:87px;width:1px;height:22px;background:#ffffff;"></div>
<div style="left:726px;top:109px;width:24px;height:1px;background:#696969;"></div>
<div style="left:749px;top:87px;width:1px;height:23px;background:#696969;"></div>
<div style="left:727px;top:88px;width:21px;height:1px;background:#e3e3e3;"></div>
<div style="left:727px;top:88px;width:1px;height:20px;background:#e3e3e3;"></div>
<div style="left:727px;top:108px;width:22px;height:1px;background:#a0a0a0;"></div>
<div style="left:748px;top:88px;width:1px;height:21px;background:#a0a0a0;"></div>
<div style="left:726px;top:111px;width:24px;height:23px;background:#f0f0f0;"></div>
<div style="left:726px;top:111px;width:23px;height:1px;background:#ffffff;"></div>
<div style="left:726px;top:111px;width:1px;height:22px;background:#ffffff;"></div>
<div style="left:726px;top:133px;width:24px;height:1px;background:#696969;"></div>
<div style="left:749px;top:111px;width:1px;height:23px;background:#696969;"></div>
<div style="left:727px;top:112px;width:21px;height:1px;background:#e3e3e3;"></div>
<div style="left:727px;top:112px;width:1px;height:20px;background:#e3e3e3;"></div>
<div style="left:727px;top:132px;width:22px;height:1px;background:#a0a0a0;"></div>
<div style="left:748px;top:112px;width:1px;height:21px;background:#a0a0a0;"></div>
<svg style="left:731px;top:92px" width="14" height="14" viewBox="0 0 14 14" shape-rendering="crispEdges"><rect x="0" y="0" width="14" height="1" fill="#000000"/><rect x="0" y="1" width="1" height="1" fill="#000000"/><rect x="1" y="1" width="1" height="1" fill="#808000"/><rect x="2" y="1" width="1" height="1" fill="#000000"/><rect x="3" y="1" width="8" height="1" fill="#f6f6f6"/><rect x="11" y="1" width="1" height="1" fill="#000000"/><rect x="12" y="1" width="1" height="1" fill="#f6f6f6"/><rect x="13" y="1" width="1" height="1" fill="#000000"/><rect x="0" y="2" width="1" height="1" fill="#000000"/><rect x="1" y="2" width="1" height="1" fill="#808000"/><rect x="2" y="2" width="1" height="1" fill="#000000"/><rect x="3" y="2" width="8" height="1" fill="#f6f6f6"/><rect x="11" y="2" width="1" height="1" fill="#000000"/><rect x="12" y="2" width="1" height="1" fill="#808000"/><rect x="13" y="2" width="1" height="1" fill="#000000"/><rect x="0" y="3" width="1" height="1" fill="#000000"/><rect x="1" y="3" width="1" height="1" fill="#808000"/><rect x="2" y="3" width="1" height="1" fill="#000000"/><rect x="3" y="3" width="8" height="1" fill="#f6f6f6"/><rect x="11" y="3" width="1" height="1" fill="#000000"/><rect x="12" y="3" width="1" height="1" fill="#808000"/><rect x="13" y="3" width="1" height="1" fill="#000000"/><rect x="0" y="4" width="1" height="1" fill="#000000"/><rect x="1" y="4" width="1" height="1" fill="#808000"/><rect x="2" y="4" width="1" height="1" fill="#000000"/><rect x="3" y="4" width="8" height="1" fill="#f6f6f6"/><rect x="11" y="4" width="1" height="1" fill="#000000"/><rect x="12" y="4" width="1" height="1" fill="#808000"/><rect x="13" y="4" width="1" height="1" fill="#000000"/><rect x="0" y="5" width="1" height="1" fill="#000000"/><rect x="1" y="5" width="1" height="1" fill="#808000"/><rect x="2" y="5" width="1" height="1" fill="#000000"/><rect x="3" y="5" width="8" height="1" fill="#f6f6f6"/><rect x="11" y="5" width="1" height="1" fill="#000000"/><rect x="12" y="5" width="1" height="1" fill="#808000"/><rect x="13" y="5" width="1" height="1" fill="#000000"/><rect x="0" y="6" width="1" height="1" fill="#000000"/><rect x="1" y="6" width="1" height="1" fill="#808000"/><rect x="2" y="6" width="1" height="1" fill="#000000"/><rect x="3" y="6" width="8" height="1" fill="#f6f6f6"/><rect x="11" y="6" width="1" height="1" fill="#000000"/><rect x="12" y="6" width="1" height="1" fill="#808000"/><rect x="13" y="6" width="1" height="1" fill="#000000"/><rect x="0" y="7" width="1" height="1" fill="#000000"/><rect x="1" y="7" width="12" height="1" fill="#808000"/><rect x="13" y="7" width="1" height="1" fill="#000000"/><rect x="0" y="8" width="1" height="1" fill="#000000"/><rect x="1" y="8" width="2" height="1" fill="#808000"/><rect x="3" y="8" width="8" height="1" fill="#000000"/><rect x="11" y="8" width="2" height="1" fill="#808000"/><rect x="13" y="8" width="1" height="1" fill="#000000"/><rect x="0" y="9" width="1" height="1" fill="#000000"/><rect x="1" y="9" width="2" height="1" fill="#808000"/><rect x="3" y="9" width="8" height="1" fill="#000000"/><rect x="11" y="9" width="2" height="1" fill="#808000"/><rect x="13" y="9" width="1" height="1" fill="#000000"/><rect x="0" y="10" width="1" height="1" fill="#000000"/><rect x="1" y="10" width="2" height="1" fill="#808000"/><rect x="3" y="10" width="6" height="1" fill="#000000"/><rect x="9" y="10" width="2" height="1" fill="#f6f6f6"/><rect x="11" y="10" width="2" height="1" fill="#808000"/><rect x="13" y="10" width="1" height="1" fill="#000000"/><rect x="0" y="11" width="1" height="1" fill="#000000"/><rect x="1" y="11" width="2" height="1" fill="#808000"/><rect x="3" y="11" width="6" height="1" fill="#000000"/><rect x="9" y="11" width="2" height="1" fill="#f6f6f6"/><rect x="11" y="11" width="2" height="1" fill="#808000"/><rect x="13" y="11" width="1" height="1" fill="#000000"/><rect x="0" y="12" width="1" height="1" fill="#000000"/><rect x="1" y="12" width="2" height="1" fill="#808000"/><rect x="3" y="12" width="6" height="1" fill="#000000"/><rect x="9" y="12" width="2" height="1" fill="#f6f6f6"/><rect x="11" y="12" width="2" height="1" fill="#808000"/><rect x="13" y="12" width="1" height="1" fill="#000000"/><rect x="0" y="13" width="14" height="1" fill="#000000"/></svg>
<svg style="left:730px;top:116px" width="16" height="16" viewBox="0 0 16 16" shape-rendering="crispEdges"><rect x="12" y="0" width="2" height="1" fill="#ff8080"/><rect x="0" y="1" width="9" height="1" fill="#c4c4c4"/><rect x="9" y="1" width="4" height="1" fill="#ff8080"/><rect x="13" y="1" width="3" height="1" fill="#c4c4c4"/><rect x="5" y="2" width="6" height="1" fill="#ff8080"/><rect x="12" y="2" width="2" height="1" fill="#ff8080"/><rect x="3" y="3" width="5" height="1" fill="#ff8080"/><rect x="12" y="3" width="2" height="1" fill="#ff8080"/><rect x="0" y="4" width="3" height="1" fill="#c4c4c4"/><rect x="3" y="4" width="2" height="1" fill="#ff8080"/><rect x="5" y="4" width="7" height="1" fill="#c4c4c4"/><rect x="12" y="4" width="2" height="1" fill="#ff8080"/><rect x="14" y="4" width="2" height="1" fill="#c4c4c4"/><rect x="3" y="5" width="2" height="1" fill="#ff8080"/><rect x="12" y="5" width="2" height="1" fill="#ff8080"/><rect x="3" y="6" width="2" height="1" fill="#ff8080"/><rect x="12" y="6" width="2" height="1" fill="#ff8080"/><rect x="0" y="7" width="3" height="1" fill="#c4c4c4"/><rect x="3" y="7" width="2" height="1" fill="#ff8080"/><rect x="5" y="7" width="7" height="1" fill="#c4c4c4"/><rect x="12" y="7" width="2" height="1" fill="#ff8080"/><rect x="14" y="7" width="2" height="1" fill="#c4c4c4"/><rect x="3" y="8" width="2" height="1" fill="#ff8080"/><rect x="12" y="8" width="2" height="1" fill="#ff8080"/><rect x="3" y="9" width="2" height="1" fill="#ff8080"/><rect x="10" y="9" width="4" height="1" fill="#ff8080"/><rect x="0" y="10" width="3" height="1" fill="#c4c4c4"/><rect x="3" y="10" width="2" height="1" fill="#ff8080"/><rect x="5" y="10" width="5" height="1" fill="#c4c4c4"/><rect x="10" y="10" width="4" height="1" fill="#ff8080"/><rect x="14" y="10" width="2" height="1" fill="#c4c4c4"/><rect x="3" y="11" width="2" height="1" fill="#ff8080"/><rect x="10" y="11" width="3" height="1" fill="#ff8080"/><rect x="1" y="12" width="4" height="1" fill="#ff8080"/><rect x="0" y="13" width="1" height="1" fill="#c4c4c4"/><rect x="1" y="13" width="4" height="1" fill="#ff8080"/><rect x="5" y="13" width="11" height="1" fill="#c4c4c4"/><rect x="1" y="14" width="3" height="1" fill="#ff8080"/></svg>
<div style="left:524px;top:143px;width:82px;height:17px;background:#ffffff;"></div>
<div style="left:522px;top:141px;width:85px;height:1px;background:#a0a0a0;"></div>
<div style="left:522px;top:141px;width:1px;height:20px;background:#a0a0a0;"></div>
<div style="left:522px;top:161px;width:86px;height:1px;background:#ffffff;"></div>
<div style="left:607px;top:141px;width:1px;height:21px;background:#ffffff;"></div>
<div style="left:523px;top:142px;width:83px;height:1px;background:#696969;"></div>
<div style="left:523px;top:142px;width:1px;height:18px;background:#696969;"></div>
<div style="left:523px;top:160px;width:84px;height:1px;background:#e3e3e3;"></div>
<div style="left:606px;top:142px;width:1px;height:19px;background:#e3e3e3;"></div>
<div style="left:589px;top:143px;width:17px;height:17px;background:#f0f0f0;"></div>
<div style="left:589px;top:143px;width:16px;height:1px;background:#e3e3e3;"></div>
<div style="left:589px;top:143px;width:1px;height:16px;background:#e3e3e3;"></div>
<div style="left:589px;top:159px;width:17px;height:1px;background:#696969;"></div>
<div style="left:605px;top:143px;width:1px;height:17px;background:#696969;"></div>
<div style="left:590px;top:144px;width:14px;height:1px;background:#ffffff;"></div>
<div style="left:590px;top:144px;width:1px;height:14px;background:#ffffff;"></div>
<div style="left:590px;top:158px;width:15px;height:1px;background:#a0a0a0;"></div>
<div style="left:604px;top:144px;width:1px;height:15px;background:#a0a0a0;"></div>
<div style="left:594px;top:150px;width:7px;height:1px;background:#000;"></div>
<div style="left:595px;top:151px;width:5px;height:1px;background:#000;"></div>
<div style="left:596px;top:152px;width:3px;height:1px;background:#000;"></div>
<div style="left:597px;top:153px;width:1px;height:1px;background:#000;"></div>
<span class="g" style="left:525.90px;top:145px;line-height:14px;height:14px;font-size:12px;color:#000;transform:scaleX(0.9083);text-shadow:0 0 0 rgba(0,0,0,.5);">MultiTones</span>
<div style="left:619px;top:141px;width:22px;height:1px;background:#646464;"></div>
<div style="left:619px;top:141px;width:1px;height:20px;background:#646464;"></div>
<div style="left:619px;top:161px;width:23px;height:1px;background:#646464;"></div>
<div style="left:641px;top:141px;width:1px;height:21px;background:#646464;"></div>
<div style="left:620px;top:142px;width:21px;height:19px;background:#f0f0f0;"></div>
<div style="left:620px;top:142px;width:20px;height:1px;background:#ffffff;"></div>
<div style="left:620px;top:142px;width:1px;height:18px;background:#ffffff;"></div>
<div style="left:620px;top:160px;width:21px;height:1px;background:#696969;"></div>
<div style="left:640px;top:142px;width:1px;height:19px;background:#696969;"></div>
<div style="left:621px;top:143px;width:18px;height:1px;background:#e3e3e3;"></div>
<div style="left:621px;top:143px;width:1px;height:16px;background:#e3e3e3;"></div>
<div style="left:621px;top:159px;width:19px;height:1px;background:#a0a0a0;"></div>
<div style="left:639px;top:143px;width:1px;height:17px;background:#a0a0a0;"></div>
<div style="left:623px;top:145px;width:15px;height:13px;background:transparent;border:1px dotted #000;box-sizing:border-box;"></div>
<div style="left:627px;top:154px;width:1px;height:1px;background:#000;"></div>
<div style="left:630px;top:154px;width:1px;height:1px;background:#000;"></div>
<div style="left:633px;top:154px;width:1px;height:1px;background:#000;"></div>
<div style="left:657px;top:143px;width:82px;height:17px;background:#f0f0f0;"></div>
<div style="left:655px;top:141px;width:85px;height:1px;background:#a0a0a0;"></div>
<div style="left:655px;top:141px;width:1px;height:20px;background:#a0a0a0;"></div>
<div style="left:655px;top:161px;width:86px;height:1px;background:#ffffff;"></div>
<div style="left:740px;top:141px;width:1px;height:21px;background:#ffffff;"></div>
<div style="left:656px;top:142px;width:83px;height:1px;background:#696969;"></div>
<div style="left:656px;top:142px;width:1px;height:18px;background:#696969;"></div>
<div style="left:656px;top:160px;width:84px;height:1px;background:#e3e3e3;"></div>
<div style="left:739px;top:142px;width:1px;height:19px;background:#e3e3e3;"></div>
<div style="left:722px;top:143px;width:17px;height:17px;background:#f0f0f0;"></div>
<div style="left:722px;top:143px;width:16px;height:1px;background:#e3e3e3;"></div>
<div style="left:722px;top:143px;width:1px;height:16px;background:#e3e3e3;"></div>
<div style="left:722px;top:159px;width:17px;height:1px;background:#696969;"></div>
<div style="left:738px;top:143px;width:1px;height:17px;background:#696969;"></div>
<div style="left:723px;top:144px;width:14px;height:1px;background:#ffffff;"></div>
<div style="left:723px;top:144px;width:1px;height:14px;background:#ffffff;"></div>
<div style="left:723px;top:158px;width:15px;height:1px;background:#a0a0a0;"></div>
<div style="left:737px;top:144px;width:1px;height:15px;background:#a0a0a0;"></div>
<div style="left:728px;top:151px;width:7px;height:1px;background:#ffffff;"></div>
<div style="left:729px;top:152px;width:5px;height:1px;background:#ffffff;"></div>
<div style="left:730px;top:153px;width:3px;height:1px;background:#ffffff;"></div>
<div style="left:731px;top:154px;width:1px;height:1px;background:#ffffff;"></div>
<div style="left:727px;top:150px;width:7px;height:1px;background:#a0a0a0;"></div>
<div style="left:728px;top:151px;width:5px;height:1px;background:#a0a0a0;"></div>
<div style="left:729px;top:152px;width:3px;height:1px;background:#a0a0a0;"></div>
<div style="left:730px;top:153px;width:1px;height:1px;background:#a0a0a0;"></div>
<span class="g" style="left:658.90px;top:145px;line-height:14px;height:14px;font-size:12px;color:#6d6d6d;transform:scaleX(0.9118);text-shadow:0 0 0 rgba(109,109,109,.5);">MultiTones</span>
<span class="g" style="left:576.90px;top:196px;line-height:14px;height:14px;font-size:12px;color:#000;transform:scaleX(0.8819);text-shadow:0 0 0 rgba(0,0,0,.5);">Output Frequency (Hz)</span>
<div style="left:636px;top:217px;width:85px;height:17px;background:#f0f0f0;"></div>
<div style="left:634px;top:215px;width:88px;height:1px;background:#a0a0a0;"></div>
<div style="left:634px;top:215px;width:1px;height:20px;background:#a0a0a0;"></div>
<div style="left:634px;top:235px;width:89px;height:1px;background:#ffffff;"></div>
<div style="left:722px;top:215px;width:1px;height:21px;background:#ffffff;"></div>
<div style="left:635px;top:216px;width:86px;height:1px;background:#696969;"></div>
<div style="left:635px;top:216px;width:1px;height:18px;background:#696969;"></div>
<div style="left:635px;top:234px;width:87px;height:1px;background:#e3e3e3;"></div>
<div style="left:721px;top:216px;width:1px;height:19px;background:#e3e3e3;"></div>
<div style="left:704px;top:217px;width:17px;height:17px;background:#f0f0f0;"></div>
<div style="left:704px;top:217px;width:16px;height:1px;background:#e3e3e3;"></div>
<div style="left:704px;top:217px;width:1px;height:16px;background:#e3e3e3;"></div>
<div style="left:704px;top:233px;width:17px;height:1px;background:#696969;"></div>
<div style="left:720px;top:217px;width:1px;height:17px;background:#696969;"></div>
<div style="left:705px;top:218px;width:14px;height:1px;background:#ffffff;"></div>
<div style="left:705px;top:218px;width:1px;height:14px;background:#ffffff;"></div>
<div style="left:705px;top:232px;width:15px;height:1px;background:#a0a0a0;"></div>
<div style="left:719px;top:218px;width:1px;height:15px;background:#a0a0a0;"></div>
<div style="left:710px;top:225px;width:7px;height:1px;background:#ffffff;"></div>
<div style="left:711px;top:226px;width:5px;height:1px;background:#ffffff;"></div>
<div style="left:712px;top:227px;width:3px;height:1px;background:#ffffff;"></div>
<div style="left:713px;top:228px;width:1px;height:1px;background:#ffffff;"></div>
<div style="left:709px;top:224px;width:7px;height:1px;background:#a0a0a0;"></div>
<div style="left:710px;top:225px;width:5px;height:1px;background:#a0a0a0;"></div>
<div style="left:711px;top:226px;width:3px;height:1px;background:#a0a0a0;"></div>
<div style="left:712px;top:227px;width:1px;height:1px;background:#a0a0a0;"></div>
<span class="g" style="left:637.40px;top:218px;line-height:14px;height:14px;font-size:12px;color:#6d6d6d;transform:scaleX(0.8800);text-shadow:0 0 0 rgba(109,109,109,.5);">1000</span>
<div style="left:548px;top:217px;width:85px;height:17px;background:#f0f0f0;"></div>
<div style="left:546px;top:215px;width:88px;height:1px;background:#a0a0a0;"></div>
<div style="left:546px;top:215px;width:1px;height:20px;background:#a0a0a0;"></div>
<div style="left:546px;top:235px;width:89px;height:1px;background:#ffffff;"></div>
<div style="left:634px;top:215px;width:1px;height:21px;background:#ffffff;"></div>
<div style="left:547px;top:216px;width:86px;height:1px;background:#696969;"></div>
<div style="left:547px;top:216px;width:1px;height:18px;background:#696969;"></div>
<div style="left:547px;top:234px;width:87px;height:1px;background:#e3e3e3;"></div>
<div style="left:633px;top:216px;width:1px;height:19px;background:#e3e3e3;"></div>
<div style="left:616px;top:217px;width:17px;height:17px;background:#f0f0f0;"></div>
<div style="left:616px;top:217px;width:16px;height:1px;background:#e3e3e3;"></div>
<div style="left:616px;top:217px;width:1px;height:16px;background:#e3e3e3;"></div>
<div style="left:616px;top:233px;width:17px;height:1px;background:#696969;"></div>
<div style="left:632px;top:217px;width:1px;height:17px;background:#696969;"></div>
<div style="left:617px;top:218px;width:14px;height:1px;background:#ffffff;"></div>
<div style="left:617px;top:218px;width:1px;height:14px;background:#ffffff;"></div>
<div style="left:617px;top:232px;width:15px;height:1px;background:#a0a0a0;"></div>
<div style="left:631px;top:218px;width:1px;height:15px;background:#a0a0a0;"></div>
<div style="left:622px;top:225px;width:7px;height:1px;background:#ffffff;"></div>
<div style="left:623px;top:226px;width:5px;height:1px;background:#ffffff;"></div>
<div style="left:624px;top:227px;width:3px;height:1px;background:#ffffff;"></div>
<div style="left:625px;top:228px;width:1px;height:1px;background:#ffffff;"></div>
<div style="left:621px;top:224px;width:7px;height:1px;background:#a0a0a0;"></div>
<div style="left:622px;top:225px;width:5px;height:1px;background:#a0a0a0;"></div>
<div style="left:623px;top:226px;width:3px;height:1px;background:#a0a0a0;"></div>
<div style="left:624px;top:227px;width:1px;height:1px;background:#a0a0a0;"></div>
<span class="g" style="left:549.40px;top:218px;line-height:14px;height:14px;font-size:12px;color:#6d6d6d;transform:scaleX(0.8800);text-shadow:0 0 0 rgba(109,109,109,.5);">1000</span>
<span class="g" style="left:578.90px;top:245px;line-height:14px;height:14px;font-size:12px;color:#a0a0a0;transform:scaleX(0.8814);text-shadow:0 0 0 rgba(160,160,160,.5),1px 1px 0 #fff;">Output Amplitude(Vp)</span>
<div style="left:636px;top:269px;width:85px;height:17px;background:#f0f0f0;"></div>
<div style="left:634px;top:267px;width:88px;height:1px;background:#a0a0a0;"></div>
<div style="left:634px;top:267px;width:1px;height:20px;background:#a0a0a0;"></div>
<div style="left:634px;top:287px;width:89px;height:1px;background:#ffffff;"></div>
<div style="left:722px;top:267px;width:1px;height:21px;background:#ffffff;"></div>
<div style="left:635px;top:268px;width:86px;height:1px;background:#696969;"></div>
<div style="left:635px;top:268px;width:1px;height:18px;background:#696969;"></div>
<div style="left:635px;top:286px;width:87px;height:1px;background:#e3e3e3;"></div>
<div style="left:721px;top:268px;width:1px;height:19px;background:#e3e3e3;"></div>
<div style="left:704px;top:269px;width:17px;height:17px;background:#f0f0f0;"></div>
<div style="left:704px;top:269px;width:16px;height:1px;background:#e3e3e3;"></div>
<div style="left:704px;top:269px;width:1px;height:16px;background:#e3e3e3;"></div>
<div style="left:704px;top:285px;width:17px;height:1px;background:#696969;"></div>
<div style="left:720px;top:269px;width:1px;height:17px;background:#696969;"></div>
<div style="left:705px;top:270px;width:14px;height:1px;background:#ffffff;"></div>
<div style="left:705px;top:270px;width:1px;height:14px;background:#ffffff;"></div>
<div style="left:705px;top:284px;width:15px;height:1px;background:#a0a0a0;"></div>
<div style="left:719px;top:270px;width:1px;height:15px;background:#a0a0a0;"></div>
<div style="left:710px;top:277px;width:7px;height:1px;background:#ffffff;"></div>
<div style="left:711px;top:278px;width:5px;height:1px;background:#ffffff;"></div>
<div style="left:712px;top:279px;width:3px;height:1px;background:#ffffff;"></div>
<div style="left:713px;top:280px;width:1px;height:1px;background:#ffffff;"></div>
<div style="left:709px;top:276px;width:7px;height:1px;background:#a0a0a0;"></div>
<div style="left:710px;top:277px;width:5px;height:1px;background:#a0a0a0;"></div>
<div style="left:711px;top:278px;width:3px;height:1px;background:#a0a0a0;"></div>
<div style="left:712px;top:279px;width:1px;height:1px;background:#a0a0a0;"></div>
<span class="g" style="left:637.40px;top:270px;line-height:14px;height:14px;font-size:12px;color:#6d6d6d;transform:scaleX(0.8800);text-shadow:0 0 0 rgba(109,109,109,.5);">1</span>
<div style="left:548px;top:269px;width:85px;height:17px;background:#f0f0f0;"></div>
<div style="left:546px;top:267px;width:88px;height:1px;background:#a0a0a0;"></div>
<div style="left:546px;top:267px;width:1px;height:20px;background:#a0a0a0;"></div>
<div style="left:546px;top:287px;width:89px;height:1px;background:#ffffff;"></div>
<div style="left:634px;top:267px;width:1px;height:21px;background:#ffffff;"></div>
<div style="left:547px;top:268px;width:86px;height:1px;background:#696969;"></div>
<div style="left:547px;top:268px;width:1px;height:18px;background:#696969;"></div>
<div style="left:547px;top:286px;width:87px;height:1px;background:#e3e3e3;"></div>
<div style="left:633px;top:268px;width:1px;height:19px;background:#e3e3e3;"></div>
<div style="left:616px;top:269px;width:17px;height:17px;background:#f0f0f0;"></div>
<div style="left:616px;top:269px;width:16px;height:1px;background:#e3e3e3;"></div>
<div style="left:616px;top:269px;width:1px;height:16px;background:#e3e3e3;"></div>
<div style="left:616px;top:285px;width:17px;height:1px;background:#696969;"></div>
<div style="left:632px;top:269px;width:1px;height:17px;background:#696969;"></div>
<div style="left:617px;top:270px;width:14px;height:1px;background:#ffffff;"></div>
<div style="left:617px;top:270px;width:1px;height:14px;background:#ffffff;"></div>
<div style="left:617px;top:284px;width:15px;height:1px;background:#a0a0a0;"></div>
<div style="left:631px;top:270px;width:1px;height:15px;background:#a0a0a0;"></div>
<div style="left:622px;top:277px;width:7px;height:1px;background:#ffffff;"></div>
<div style="left:623px;top:278px;width:5px;height:1px;background:#ffffff;"></div>
<div style="left:624px;top:279px;width:3px;height:1px;background:#ffffff;"></div>
<div style="left:625px;top:280px;width:1px;height:1px;background:#ffffff;"></div>
<div style="left:621px;top:276px;width:7px;height:1px;background:#a0a0a0;"></div>
<div style="left:622px;top:277px;width:5px;height:1px;background:#a0a0a0;"></div>
<div style="left:623px;top:278px;width:3px;height:1px;background:#a0a0a0;"></div>
<div style="left:624px;top:279px;width:1px;height:1px;background:#a0a0a0;"></div>
<span class="g" style="left:549.40px;top:270px;line-height:14px;height:14px;font-size:12px;color:#6d6d6d;transform:scaleX(0.8800);text-shadow:0 0 0 rgba(109,109,109,.5);">1</span>
<span class="g" style="left:549.40px;top:297px;line-height:14px;height:14px;font-size:12px;color:#a0a0a0;transform:scaleX(0.8915);text-shadow:0 0 0 rgba(160,160,160,.5),1px 1px 0 #fff;">Output Phase Difference (Degree)</span>
<div style="left:596px;top:320px;width:71px;height:17px;background:#f0f0f0;"></div>
<div style="left:594px;top:318px;width:74px;height:1px;background:#a0a0a0;"></div>
<div style="left:594px;top:318px;width:1px;height:20px;background:#a0a0a0;"></div>
<div style="left:594px;top:338px;width:75px;height:1px;background:#ffffff;"></div>
<div style="left:668px;top:318px;width:1px;height:21px;background:#ffffff;"></div>
<div style="left:595px;top:319px;width:72px;height:1px;background:#696969;"></div>
<div style="left:595px;top:319px;width:1px;height:18px;background:#696969;"></div>
<div style="left:595px;top:337px;width:73px;height:1px;background:#e3e3e3;"></div>
<div style="left:667px;top:319px;width:1px;height:19px;background:#e3e3e3;"></div>
<div style="left:650px;top:320px;width:17px;height:17px;background:#f0f0f0;"></div>
<div style="left:650px;top:320px;width:16px;height:1px;background:#e3e3e3;"></div>
<div style="left:650px;top:320px;width:1px;height:16px;background:#e3e3e3;"></div>
<div style="left:650px;top:336px;width:17px;height:1px;background:#696969;"></div>
<div style="left:666px;top:320px;width:1px;height:17px;background:#696969;"></div>
<div style="left:651px;top:321px;width:14px;height:1px;background:#ffffff;"></div>
<div style="left:651px;top:321px;width:1px;height:14px;background:#ffffff;"></div>
<div style="left:651px;top:335px;width:15px;height:1px;background:#a0a0a0;"></div>
<div style="left:665px;top:321px;width:1px;height:15px;background:#a0a0a0;"></div>
<div style="left:656px;top:328px;width:7px;height:1px;background:#ffffff;"></div>
<div style="left:657px;top:329px;width:5px;height:1px;background:#ffffff;"></div>
<div style="left:658px;top:330px;width:3px;height:1px;background:#ffffff;"></div>
<div style="left:659px;top:331px;width:1px;height:1px;background:#ffffff;"></div>
<div style="left:655px;top:327px;width:7px;height:1px;background:#a0a0a0;"></div>
<div style="left:656px;top:328px;width:5px;height:1px;background:#a0a0a0;"></div>
<div style="left:657px;top:329px;width:3px;height:1px;background:#a0a0a0;"></div>
<div style="left:658px;top:330px;width:1px;height:1px;background:#a0a0a0;"></div>
<span class="g" style="left:597.40px;top:321px;line-height:14px;height:14px;font-size:12px;color:#6d6d6d;transform:scaleX(0.8800);text-shadow:0 0 0 rgba(109,109,109,.5);">0</span>
<span class="g" style="left:514.40px;top:342px;line-height:14px;height:14px;font-size:12px;color:#a0a0a0;transform:scaleX(0.8592);text-shadow:0 0 0 rgba(160,160,160,.5),1px 1px 0 #fff;">0.0dBFS</span>
<div style="left:519px;top:204px;width:1px;height:134px;background:#a0a0a0;"></div>
<div style="left:520px;top:205px;width:1px;height:132px;background:#696969;"></div>
<div style="left:521px;top:205px;width:1px;height:132px;background:#e3e3e3;"></div>
<div style="left:522px;top:204px;width:1px;height:134px;background:#ffffff;"></div>
<div style="left:519px;top:204px;width:3px;height:1px;background:#a0a0a0;"></div>
<div style="left:519px;top:337px;width:4px;height:1px;background:#ffffff;"></div>
<div style="left:516px;top:328px;width:11px;height:5px;background:#f0f0f0;"></div>
<div style="left:516px;top:328px;width:10px;height:1px;background:#ffffff;"></div>
<div style="left:516px;top:328px;width:1px;height:4px;background:#ffffff;"></div>
<div style="left:516px;top:332px;width:11px;height:1px;background:#696969;"></div>
<div style="left:526px;top:328px;width:1px;height:5px;background:#696969;"></div>
<div style="left:517px;top:329px;width:8px;height:1px;background:#e3e3e3;"></div>
<div style="left:517px;top:329px;width:1px;height:2px;background:#e3e3e3;"></div>
<div style="left:517px;top:331px;width:9px;height:1px;background:#a0a0a0;"></div>
<div style="left:525px;top:329px;width:1px;height:3px;background:#a0a0a0;"></div>
<div style="left:534px;top:204px;width:1px;height:134px;background:#a0a0a0;"></div>
<div style="left:535px;top:205px;width:1px;height:132px;background:#696969;"></div>
<div style="left:536px;top:205px;width:1px;height:132px;background:#e3e3e3;"></div>
<div style="left:537px;top:204px;width:1px;height:134px;background:#ffffff;"></div>
<div style="left:534px;top:204px;width:3px;height:1px;background:#a0a0a0;"></div>
<div style="left:534px;top:337px;width:4px;height:1px;background:#ffffff;"></div>
<div style="left:531px;top:204px;width:11px;height:5px;background:#f0f0f0;"></div>
<div style="left:531px;top:204px;width:10px;height:1px;background:#ffffff;"></div>
<div style="left:531px;top:204px;width:1px;height:4px;background:#ffffff;"></div>
<div style="left:531px;top:208px;width:11px;height:1px;background:#696969;"></div>
<div style="left:541px;top:204px;width:1px;height:5px;background:#696969;"></div>
<div style="left:532px;top:205px;width:8px;height:1px;background:#e3e3e3;"></div>
<div style="left:532px;top:205px;width:1px;height:2px;background:#e3e3e3;"></div>
<div style="left:532px;top:207px;width:9px;height:1px;background:#a0a0a0;"></div>
<div style="left:540px;top:205px;width:1px;height:3px;background:#a0a0a0;"></div>
<div style="left:728px;top:204px;width:1px;height:134px;background:#a0a0a0;"></div>
<div style="left:729px;top:205px;width:1px;height:132px;background:#696969;"></div>
<div style="left:730px;top:205px;width:1px;height:132px;background:#e3e3e3;"></div>
<div style="left:731px;top:204px;width:1px;height:134px;background:#ffffff;"></div>
<div style="left:728px;top:204px;width:3px;height:1px;background:#a0a0a0;"></div>
<div style="left:728px;top:337px;width:4px;height:1px;background:#ffffff;"></div>
<div style="left:725px;top:204px;width:11px;height:5px;background:#f0f0f0;"></div>
<div style="left:725px;top:204px;width:10px;height:1px;background:#ffffff;"></div>
<div style="left:725px;top:204px;width:1px;height:4px;background:#ffffff;"></div>
<div style="left:725px;top:208px;width:11px;height:1px;background:#696969;"></div>
<div style="left:735px;top:204px;width:1px;height:5px;background:#696969;"></div>
<div style="left:726px;top:205px;width:8px;height:1px;background:#e3e3e3;"></div>
<div style="left:726px;top:205px;width:1px;height:2px;background:#e3e3e3;"></div>
<div style="left:726px;top:207px;width:9px;height:1px;background:#a0a0a0;"></div>
<div style="left:734px;top:205px;width:1px;height:3px;background:#a0a0a0;"></div>
<div style="left:741px;top:204px;width:1px;height:134px;background:#a0a0a0;"></div>
<div style="left:742px;top:205px;width:1px;height:132px;background:#696969;"></div>
<div style="left:743px;top:205px;width:1px;height:132px;background:#e3e3e3;"></div>
<div style="left:744px;top:204px;width:1px;height:134px;background:#ffffff;"></div>
<div style="left:741px;top:204px;width:3px;height:1px;background:#a0a0a0;"></div>
<div style="left:741px;top:337px;width:4px;height:1px;background:#ffffff;"></div>
<div style="left:738px;top:328px;width:11px;height:5px;background:#f0f0f0;"></div>
<div style="left:738px;top:328px;width:10px;height:1px;background:#ffffff;"></div>
<div style="left:738px;top:328px;width:1px;height:4px;background:#ffffff;"></div>
<div style="left:738px;top:332px;width:11px;height:1px;background:#696969;"></div>
<div style="left:748px;top:328px;width:1px;height:5px;background:#696969;"></div>
<div style="left:739px;top:329px;width:8px;height:1px;background:#e3e3e3;"></div>
<div style="left:739px;top:329px;width:1px;height:2px;background:#e3e3e3;"></div>
<div style="left:739px;top:331px;width:9px;height:1px;background:#a0a0a0;"></div>
<div style="left:747px;top:329px;width:1px;height:3px;background:#a0a0a0;"></div>
<div style="left:569px;top:347px;width:121px;height:1px;background:#a0a0a0;"></div>
<div style="left:570px;top:348px;width:119px;height:1px;background:#696969;"></div>
<div style="left:570px;top:349px;width:119px;height:1px;background:#e3e3e3;"></div>
<div style="left:569px;top:350px;width:121px;height:1px;background:#ffffff;"></div>
<div style="left:569px;top:347px;width:1px;height:3px;background:#a0a0a0;"></div>
<div style="left:689px;top:347px;width:1px;height:4px;background:#ffffff;"></div>
<div style="left:628px;top:343px;width:5px;height:11px;background:#f0f0f0;"></div>
<div style="left:628px;top:343px;width:4px;height:1px;background:#ffffff;"></div>
<div style="left:628px;top:343px;width:1px;height:10px;background:#ffffff;"></div>
<div style="left:628px;top:353px;width:5px;height:1px;background:#696969;"></div>
<div style="left:632px;top:343px;width:1px;height:11px;background:#696969;"></div>
<div style="left:629px;top:344px;width:2px;height:1px;background:#e3e3e3;"></div>
<div style="left:629px;top:344px;width:1px;height:8px;background:#e3e3e3;"></div>
<div style="left:629px;top:352px;width:3px;height:1px;background:#a0a0a0;"></div>
<div style="left:631px;top:344px;width:1px;height:9px;background:#a0a0a0;"></div>
<span class="g" style="left:702.90px;top:342px;line-height:14px;height:14px;font-size:12px;color:#a0a0a0;transform:scaleX(0.8699);text-shadow:0 0 0 rgba(160,160,160,.5),1px 1px 0 #fff;">0.0dBFS</span>
<div style="left:513px;top:361px;width:1px;height:47px;background:#a0a0a0;"></div>
<div style="left:514px;top:362px;width:1px;height:45px;background:#ffffff;"></div>
<div style="left:513px;top:407px;width:238px;height:1px;background:#a0a0a0;"></div>
<div style="left:513px;top:408px;width:239px;height:1px;background:#ffffff;"></div>
<div style="left:750px;top:361px;width:1px;height:47px;background:#a0a0a0;"></div>
<div style="left:751px;top:361px;width:1px;height:48px;background:#ffffff;"></div>
<div style="left:513px;top:361px;width:238px;height:1px;background:#a0a0a0;"></div>
<div style="left:514px;top:362px;width:235px;height:1px;background:#ffffff;"></div>
<div style="left:522px;top:369px;width:9px;height:9px;background:#ffffff;"></div>
<div style="left:520px;top:367px;width:12px;height:1px;background:#a0a0a0;"></div>
<div style="left:520px;top:367px;width:1px;height:12px;background:#a0a0a0;"></div>
<div style="left:520px;top:379px;width:13px;height:1px;background:#ffffff;"></div>
<div style="left:532px;top:367px;width:1px;height:13px;background:#ffffff;"></div>
<div style="left:521px;top:368px;width:10px;height:1px;background:#696969;"></div>
<div style="left:521px;top:368px;width:1px;height:10px;background:#696969;"></div>
<div style="left:521px;top:378px;width:11px;height:1px;background:#e3e3e3;"></div>
<div style="left:531px;top:368px;width:1px;height:11px;background:#e3e3e3;"></div>
<span class="g" style="left:538.40px;top:367px;line-height:14px;height:14px;font-size:12px;color:#000;transform:scaleX(0.8789);text-shadow:0 0 0 rgba(0,0,0,.5);">Mask</span>
<div style="left:583px;top:366px;width:15px;height:15px;background:#f0f0f0;"></div>
<div style="left:583px;top:366px;width:14px;height:1px;background:#ffffff;"></div>
<div style="left:583px;top:366px;width:1px;height:14px;background:#ffffff;"></div>
<div style="left:583px;top:380px;width:15px;height:1px;background:#696969;"></div>
<div style="left:597px;top:366px;width:1px;height:15px;background:#696969;"></div>
<div style="left:584px;top:367px;width:12px;height:1px;background:#e3e3e3;"></div>
<div style="left:584px;top:367px;width:1px;height:12px;background:#e3e3e3;"></div>
<div style="left:584px;top:379px;width:13px;height:1px;background:#a0a0a0;"></div>
<div style="left:596px;top:367px;width:1px;height:13px;background:#a0a0a0;"></div>
<div style="left:588px;top:378px;width:1px;height:1px;background:#ffffff;"></div>
<div style="left:587px;top:377px;width:1px;height:1px;background:#a0a0a0;"></div>
<div style="left:591px;top:378px;width:1px;height:1px;background:#ffffff;"></div>
<div style="left:590px;top:377px;width:1px;height:1px;background:#a0a0a0;"></div>
<div style="left:594px;top:378px;width:1px;height:1px;background:#ffffff;"></div>
<div style="left:593px;top:377px;width:1px;height:1px;background:#a0a0a0;"></div>
<span class="g" style="left:618.90px;top:368px;line-height:14px;height:14px;font-size:12px;color:#a0a0a0;transform:scaleX(0.8431);text-shadow:0 0 0 rgba(160,160,160,.5),1px 1px 0 #fff;">On (s)</span>
<span class="g" style="left:694.40px;top:368px;line-height:14px;height:14px;font-size:12px;color:#a0a0a0;transform:scaleX(0.8431);text-shadow:0 0 0 rgba(160,160,160,.5),1px 1px 0 #fff;">Off (s)</span>
<div style="left:522px;top:389px;width:9px;height:9px;background:#f0f0f0;"></div>
<div style="left:520px;top:387px;width:12px;height:1px;background:#a0a0a0;"></div>
<div style="left:520px;top:387px;width:1px;height:12px;background:#a0a0a0;"></div>
<div style="left:520px;top:399px;width:13px;height:1px;background:#ffffff;"></div>
<div style="left:532px;top:387px;width:1px;height:13px;background:#ffffff;"></div>
<div style="left:521px;top:388px;width:10px;height:1px;background:#696969;"></div>
<div style="left:521px;top:388px;width:1px;height:10px;background:#696969;"></div>
<div style="left:521px;top:398px;width:11px;height:1px;background:#e3e3e3;"></div>
<div style="left:531px;top:388px;width:1px;height:11px;background:#e3e3e3;"></div>
<div style="left:523px;top:392px;width:1px;height:3px;background:#a0a0a0;"></div>
<div style="left:524px;top:393px;width:1px;height:3px;background:#a0a0a0;"></div>
<div style="left:525px;top:394px;width:1px;height:3px;background:#a0a0a0;"></div>
<div style="left:526px;top:393px;width:1px;height:3px;background:#a0a0a0;"></div>
<div style="left:527px;top:392px;width:1px;height:3px;background:#a0a0a0;"></div>
<div style="left:528px;top:391px;width:1px;height:3px;background:#a0a0a0;"></div>
<div style="left:529px;top:390px;width:1px;height:3px;background:#a0a0a0;"></div>
<span class="g" style="left:538.40px;top:387px;line-height:14px;height:14px;font-size:12px;color:#a0a0a0;transform:scaleX(0.8949);text-shadow:0 0 0 rgba(160,160,160,.5),1px 1px 0 #fff;">Phase Lock</span>
<div style="left:608px;top:386px;width:62px;height:16px;background:#f0f0f0;"></div>
<div style="left:606px;top:384px;width:65px;height:1px;background:#a0a0a0;"></div>
<div style="left:606px;top:384px;width:1px;height:19px;background:#a0a0a0;"></div>
<div style="left:606px;top:403px;width:66px;height:1px;background:#ffffff;"></div>
<div style="left:671px;top:384px;width:1px;height:20px;background:#ffffff;"></div>
<div style="left:607px;top:385px;width:63px;height:1px;background:#696969;"></div>
<div style="left:607px;top:385px;width:1px;height:17px;background:#696969;"></div>
<div style="left:607px;top:402px;width:64px;height:1px;background:#e3e3e3;"></div>
<div style="left:670px;top:385px;width:1px;height:18px;background:#e3e3e3;"></div>
<span class="g" style="left:609.40px;top:387px;line-height:14px;height:14px;font-size:12px;color:#6d6d6d;transform:scaleX(0.8800);text-shadow:0 0 0 rgba(109,109,109,.5);">1</span>
<div style="left:681px;top:386px;width:62px;height:16px;background:#f0f0f0;"></div>
<div style="left:679px;top:384px;width:65px;height:1px;background:#a0a0a0;"></div>
<div style="left:679px;top:384px;width:1px;height:19px;background:#a0a0a0;"></div>
<div style="left:679px;top:403px;width:66px;height:1px;background:#ffffff;"></div>
<div style="left:744px;top:384px;width:1px;height:20px;background:#ffffff;"></div>
<div style="left:680px;top:385px;width:63px;height:1px;background:#696969;"></div>
<div style="left:680px;top:385px;width:1px;height:17px;background:#696969;"></div>
<div style="left:680px;top:402px;width:64px;height:1px;background:#e3e3e3;"></div>
<div style="left:743px;top:385px;width:1px;height:18px;background:#e3e3e3;"></div>
<span class="g" style="left:682.40px;top:387px;line-height:14px;height:14px;font-size:12px;color:#6d6d6d;transform:scaleX(0.8800);text-shadow:0 0 0 rgba(109,109,109,.5);">0</span>
<div style="left:513px;top:413px;width:1px;height:45px;background:#a0a0a0;"></div>
<div style="left:514px;top:414px;width:1px;height:43px;background:#ffffff;"></div>
<div style="left:513px;top:457px;width:238px;height:1px;background:#a0a0a0;"></div>
<div style="left:513px;top:458px;width:239px;height:1px;background:#ffffff;"></div>
<div style="left:750px;top:413px;width:1px;height:45px;background:#a0a0a0;"></div>
<div style="left:751px;top:413px;width:1px;height:46px;background:#ffffff;"></div>
<div style="left:513px;top:413px;width:238px;height:1px;background:#a0a0a0;"></div>
<div style="left:514px;top:414px;width:235px;height:1px;background:#ffffff;"></div>
<div style="left:522px;top:430px;width:9px;height:9px;background:#ffffff;"></div>
<div style="left:520px;top:428px;width:12px;height:1px;background:#a0a0a0;"></div>
<div style="left:520px;top:428px;width:1px;height:12px;background:#a0a0a0;"></div>
<div style="left:520px;top:440px;width:13px;height:1px;background:#ffffff;"></div>
<div style="left:532px;top:428px;width:1px;height:13px;background:#ffffff;"></div>
<div style="left:521px;top:429px;width:10px;height:1px;background:#696969;"></div>
<div style="left:521px;top:429px;width:1px;height:10px;background:#696969;"></div>
<div style="left:521px;top:439px;width:11px;height:1px;background:#e3e3e3;"></div>
<div style="left:531px;top:429px;width:1px;height:11px;background:#e3e3e3;"></div>
<span class="g" style="left:538.40px;top:428px;line-height:14px;height:14px;font-size:12px;color:#000;transform:scaleX(0.8631);text-shadow:0 0 0 rgba(0,0,0,.5);">Fade</span>
<span class="g" style="left:618.90px;top:418px;line-height:14px;height:14px;font-size:12px;color:#a0a0a0;transform:scaleX(0.8453);text-shadow:0 0 0 rgba(160,160,160,.5),1px 1px 0 #fff;">In (s)</span>
<span class="g" style="left:694.40px;top:418px;line-height:14px;height:14px;font-size:12px;color:#a0a0a0;transform:scaleX(0.8484);text-shadow:0 0 0 rgba(160,160,160,.5),1px 1px 0 #fff;">Out (s)</span>
<div style="left:608px;top:437px;width:62px;height:16px;background:#f0f0f0;"></div>
<div style="left:606px;top:435px;width:65px;height:1px;background:#a0a0a0;"></div>
<div style="left:606px;top:435px;width:1px;height:19px;background:#a0a0a0;"></div>
<div style="left:606px;top:454px;width:66px;height:1px;background:#ffffff;"></div>
<div style="left:671px;top:435px;width:1px;height:20px;background:#ffffff;"></div>
<div style="left:607px;top:436px;width:63px;height:1px;background:#696969;"></div>
<div style="left:607px;top:436px;width:1px;height:17px;background:#696969;"></div>
<div style="left:607px;top:453px;width:64px;height:1px;background:#e3e3e3;"></div>
<div style="left:670px;top:436px;width:1px;height:18px;background:#e3e3e3;"></div>
<span class="g" style="left:609.40px;top:438px;line-height:14px;height:14px;font-size:12px;color:#6d6d6d;transform:scaleX(0.8800);text-shadow:0 0 0 rgba(109,109,109,.5);">0.01</span>
<div style="left:681px;top:437px;width:62px;height:16px;background:#f0f0f0;"></div>
<div style="left:679px;top:435px;width:65px;height:1px;background:#a0a0a0;"></div>
<div style="left:679px;top:435px;width:1px;height:19px;background:#a0a0a0;"></div>
<div style="left:679px;top:454px;width:66px;height:1px;background:#ffffff;"></div>
<div style="left:744px;top:435px;width:1px;height:20px;background:#ffffff;"></div>
<div style="left:680px;top:436px;width:63px;height:1px;background:#696969;"></div>
<div style="left:680px;top:436px;width:1px;height:17px;background:#696969;"></div>
<div style="left:680px;top:453px;width:64px;height:1px;background:#e3e3e3;"></div>
<div style="left:743px;top:436px;width:1px;height:18px;background:#e3e3e3;"></div>
<span class="g" style="left:682.40px;top:438px;line-height:14px;height:14px;font-size:12px;color:#6d6d6d;transform:scaleX(0.8800);text-shadow:0 0 0 rgba(109,109,109,.5);">0.01</span>
<div style="left:513px;top:463px;width:1px;height:47px;background:#a0a0a0;"></div>
<div style="left:514px;top:464px;width:1px;height:45px;background:#ffffff;"></div>
<div style="left:513px;top:509px;width:238px;height:1px;background:#a0a0a0;"></div>
<div style="left:513px;top:510px;width:239px;height:1px;background:#ffffff;"></div>
<div style="left:750px;top:463px;width:1px;height:47px;background:#a0a0a0;"></div>
<div style="left:751px;top:463px;width:1px;height:48px;background:#ffffff;"></div>
<div style="left:513px;top:463px;width:238px;height:1px;background:#a0a0a0;"></div>
<div style="left:514px;top:464px;width:235px;height:1px;background:#ffffff;"></div>
<span class="g" style="left:516.40px;top:467px;line-height:14px;height:14px;font-size:12px;color:#000;transform:scaleX(0.8790);text-shadow:0 0 0 rgba(0,0,0,.5);">Modulation</span>
<span class="g" style="left:589.40px;top:467px;line-height:14px;height:14px;font-size:12px;color:#a0a0a0;transform:scaleX(0.8295);text-shadow:0 0 0 rgba(160,160,160,.5),1px 1px 0 #fff;">Carrier (Hz)</span>
<span class="g" style="left:664.40px;top:467px;line-height:14px;height:14px;font-size:12px;color:#a0a0a0;transform:scaleX(0.8581);text-shadow:0 0 0 rgba(160,160,160,.5),1px 1px 0 #fff;">Mod. Index (%)</span>
<div style="left:518px;top:487px;width:55px;height:17px;background:#ffffff;"></div>
<div style="left:516px;top:485px;width:58px;height:1px;background:#a0a0a0;"></div>
<div style="left:516px;top:485px;width:1px;height:20px;background:#a0a0a0;"></div>
<div style="left:516px;top:505px;width:59px;height:1px;background:#ffffff;"></div>
<div style="left:574px;top:485px;width:1px;height:21px;background:#ffffff;"></div>
<div style="left:517px;top:486px;width:56px;height:1px;background:#696969;"></div>
<div style="left:517px;top:486px;width:1px;height:18px;background:#696969;"></div>
<div style="left:517px;top:504px;width:57px;height:1px;background:#e3e3e3;"></div>
<div style="left:573px;top:486px;width:1px;height:19px;background:#e3e3e3;"></div>
<div style="left:556px;top:487px;width:17px;height:17px;background:#f0f0f0;"></div>
<div style="left:556px;top:487px;width:16px;height:1px;background:#e3e3e3;"></div>
<div style="left:556px;top:487px;width:1px;height:16px;background:#e3e3e3;"></div>
<div style="left:556px;top:503px;width:17px;height:1px;background:#696969;"></div>
<div style="left:572px;top:487px;width:1px;height:17px;background:#696969;"></div>
<div style="left:557px;top:488px;width:14px;height:1px;background:#ffffff;"></div>
<div style="left:557px;top:488px;width:1px;height:14px;background:#ffffff;"></div>
<div style="left:557px;top:502px;width:15px;height:1px;background:#a0a0a0;"></div>
<div style="left:571px;top:488px;width:1px;height:15px;background:#a0a0a0;"></div>
<div style="left:561px;top:494px;width:7px;height:1px;background:#000;"></div>
<div style="left:562px;top:495px;width:5px;height:1px;background:#000;"></div>
<div style="left:563px;top:496px;width:3px;height:1px;background:#000;"></div>
<div style="left:564px;top:497px;width:1px;height:1px;background:#000;"></div>
<span class="g" style="left:520.40px;top:489px;line-height:14px;height:14px;font-size:12px;color:#000;transform:scaleX(0.8800);text-shadow:0 0 0 rgba(0,0,0,.5);">NIL</span>
<div style="left:591px;top:487px;width:61px;height:16px;background:#f0f0f0;"></div>
<div style="left:589px;top:485px;width:64px;height:1px;background:#a0a0a0;"></div>
<div style="left:589px;top:485px;width:1px;height:19px;background:#a0a0a0;"></div>
<div style="left:589px;top:504px;width:65px;height:1px;background:#ffffff;"></div>
<div style="left:653px;top:485px;width:1px;height:20px;background:#ffffff;"></div>
<div style="left:590px;top:486px;width:62px;height:1px;background:#696969;"></div>
<div style="left:590px;top:486px;width:1px;height:17px;background:#696969;"></div>
<div style="left:590px;top:503px;width:63px;height:1px;background:#e3e3e3;"></div>
<div style="left:652px;top:486px;width:1px;height:18px;background:#e3e3e3;"></div>
<span class="g" style="left:592.40px;top:488px;line-height:14px;height:14px;font-size:12px;color:#6d6d6d;transform:scaleX(0.8800);text-shadow:0 0 0 rgba(109,109,109,.5);">0</span>
<div style="left:672px;top:487px;width:61px;height:16px;background:#f0f0f0;"></div>
<div style="left:670px;top:485px;width:64px;height:1px;background:#a0a0a0;"></div>
<div style="left:670px;top:485px;width:1px;height:19px;background:#a0a0a0;"></div>
<div style="left:670px;top:504px;width:65px;height:1px;background:#ffffff;"></div>
<div style="left:734px;top:485px;width:1px;height:20px;background:#ffffff;"></div>
<div style="left:671px;top:486px;width:62px;height:1px;background:#696969;"></div>
<div style="left:671px;top:486px;width:1px;height:17px;background:#696969;"></div>
<div style="left:671px;top:503px;width:63px;height:1px;background:#e3e3e3;"></div>
<div style="left:733px;top:486px;width:1px;height:18px;background:#e3e3e3;"></div>
<span class="g" style="left:673.40px;top:488px;line-height:14px;height:14px;font-size:12px;color:#6d6d6d;transform:scaleX(0.8800);text-shadow:0 0 0 rgba(109,109,109,.5);">0</span>
<span class="g" style="left:513.40px;top:518px;line-height:14px;height:14px;font-size:12px;color:#000;transform:scaleX(0.8614);text-shadow:0 0 0 rgba(0,0,0,.5);">Duration (s)</span>
<div style="left:579px;top:518px;width:62px;height:16px;background:#ffffff;"></div>
<div style="left:577px;top:516px;width:65px;height:1px;background:#a0a0a0;"></div>
<div style="left:577px;top:516px;width:1px;height:19px;background:#a0a0a0;"></div>
<div style="left:577px;top:535px;width:66px;height:1px;background:#ffffff;"></div>
<div style="left:642px;top:516px;width:1px;height:20px;background:#ffffff;"></div>
<div style="left:578px;top:517px;width:63px;height:1px;background:#696969;"></div>
<div style="left:578px;top:517px;width:1px;height:17px;background:#696969;"></div>
<div style="left:578px;top:534px;width:64px;height:1px;background:#e3e3e3;"></div>
<div style="left:641px;top:517px;width:1px;height:18px;background:#e3e3e3;"></div>
<span class="g" style="left:580.40px;top:519px;line-height:14px;height:14px;font-size:12px;color:#000;transform:scaleX(0.8800);text-shadow:0 0 0 rgba(0,0,0,.5);">1</span>
<div style="left:651px;top:521px;width:9px;height:9px;background:#ffffff;"></div>
<div style="left:649px;top:519px;width:12px;height:1px;background:#a0a0a0;"></div>
<div style="left:649px;top:519px;width:1px;height:12px;background:#a0a0a0;"></div>
<div style="left:649px;top:531px;width:13px;height:1px;background:#ffffff;"></div>
<div style="left:661px;top:519px;width:1px;height:13px;background:#ffffff;"></div>
<div style="left:650px;top:520px;width:10px;height:1px;background:#696969;"></div>
<div style="left:650px;top:520px;width:1px;height:10px;background:#696969;"></div>
<div style="left:650px;top:530px;width:11px;height:1px;background:#e3e3e3;"></div>
<div style="left:660px;top:520px;width:1px;height:11px;background:#e3e3e3;"></div>
<div style="left:652px;top:524px;width:1px;height:3px;background:#000;"></div>
<div style="left:653px;top:525px;width:1px;height:3px;background:#000;"></div>
<div style="left:654px;top:526px;width:1px;height:3px;background:#000;"></div>
<div style="left:655px;top:525px;width:1px;height:3px;background:#000;"></div>
<div style="left:656px;top:524px;width:1px;height:3px;background:#000;"></div>
<div style="left:657px;top:523px;width:1px;height:3px;background:#000;"></div>
<div style="left:658px;top:522px;width:1px;height:3px;background:#000;"></div>
<span class="g" style="left:666.90px;top:519px;line-height:14px;height:14px;font-size:12px;color:#000;transform:scaleX(0.9030);text-shadow:0 0 0 rgba(0,0,0,.5);">Loop</span>
<div style="left:707px;top:521px;width:9px;height:9px;background:#f0f0f0;"></div>
<div style="left:705px;top:519px;width:12px;height:1px;background:#a0a0a0;"></div>
<div style="left:705px;top:519px;width:1px;height:12px;background:#a0a0a0;"></div>
<div style="left:705px;top:531px;width:13px;height:1px;background:#ffffff;"></div>
<div style="left:717px;top:519px;width:1px;height:13px;background:#ffffff;"></div>
<div style="left:706px;top:520px;width:10px;height:1px;background:#696969;"></div>
<div style="left:706px;top:520px;width:1px;height:10px;background:#696969;"></div>
<div style="left:706px;top:530px;width:11px;height:1px;background:#e3e3e3;"></div>
<div style="left:716px;top:520px;width:1px;height:11px;background:#e3e3e3;"></div>
<span class="g" style="left:723.40px;top:519px;line-height:14px;height:14px;font-size:12px;color:#a0a0a0;transform:scaleX(0.8523);text-shadow:0 0 0 rgba(160,160,160,.5),1px 1px 0 #fff;">DDS</span>
<div style="left:515px;top:545px;width:9px;height:9px;background:#ffffff;"></div>
<div style="left:513px;top:543px;width:12px;height:1px;background:#a0a0a0;"></div>
<div style="left:513px;top:543px;width:1px;height:12px;background:#a0a0a0;"></div>
<div style="left:513px;top:555px;width:13px;height:1px;background:#ffffff;"></div>
<div style="left:525px;top:543px;width:1px;height:13px;background:#ffffff;"></div>
<div style="left:514px;top:544px;width:10px;height:1px;background:#696969;"></div>
<div style="left:514px;top:544px;width:1px;height:10px;background:#696969;"></div>
<div style="left:514px;top:554px;width:11px;height:1px;background:#e3e3e3;"></div>
<div style="left:524px;top:544px;width:1px;height:11px;background:#e3e3e3;"></div>
<div style="left:516px;top:548px;width:1px;height:3px;background:#000;"></div>
<div style="left:517px;top:549px;width:1px;height:3px;background:#000;"></div>
<div style="left:518px;top:550px;width:1px;height:3px;background:#000;"></div>
<div style="left:519px;top:549px;width:1px;height:3px;background:#000;"></div>
<div style="left:520px;top:548px;width:1px;height:3px;background:#000;"></div>
<div style="left:521px;top:547px;width:1px;height:3px;background:#000;"></div>
<div style="left:522px;top:546px;width:1px;height:3px;background:#000;"></div>
<span class="g" style="left:531.40px;top:543px;line-height:14px;height:14px;font-size:12px;color:#000;transform:scaleX(0.8886);text-shadow:0 0 0 rgba(0,0,0,.5);">Sweep</span>
<svg style="left:590px;top:543px" width="12" height="12" viewBox="0 0 12 12" shape-rendering="crispEdges"><path d="M4 0h4v1h-4zM2 1h2v1h-2zM8 1h2v1h-2zM1 2h1v2h-1zM0 4h1v4h-1zM1 8h1v2h-1z" fill="#a0a0a0"/><path d="M10 2h1v2h-1zM11 4h1v4h-1zM10 8h1v2h-1zM8 10h2v1h-2zM2 10h2v1h-2zM4 11h4v1h-4z" fill="#ffffff"/><path d="M4 1h4v1h-4zM2 2h2v1h-2zM8 2h2v1h-2zM2 3h1v1h-1zM1 4h1v4h-1zM2 8h1v1h-1z" fill="#696969"/><path d="M9 3h1v1h-1zM10 4h1v4h-1zM9 8h1v1h-1zM8 9h2v1h-2zM2 9h2v1h-2zM4 10h4v1h-4z" fill="#e3e3e3"/><path d="M4 2h4v1h-4zM3 3h6v1h-6zM2 4h8v4h-8zM3 8h6v1h-6zM4 9h4v1h-4z" fill="#ffffff"/></svg>
<span class="g" style="left:606.90px;top:543px;line-height:14px;height:14px;font-size:12px;color:#000;transform:scaleX(0.8838);text-shadow:0 0 0 rgba(0,0,0,.5);">Frequency</span>
<svg style="left:671px;top:543px" width="12" height="12" viewBox="0 0 12 12" shape-rendering="crispEdges"><path d="M4 0h4v1h-4zM2 1h2v1h-2zM8 1h2v1h-2zM1 2h1v2h-1zM0 4h1v4h-1zM1 8h1v2h-1z" fill="#a0a0a0"/><path d="M10 2h1v2h-1zM11 4h1v4h-1zM10 8h1v2h-1zM8 10h2v1h-2zM2 10h2v1h-2zM4 11h4v1h-4z" fill="#ffffff"/><path d="M4 1h4v1h-4zM2 2h2v1h-2zM8 2h2v1h-2zM2 3h1v1h-1zM1 4h1v4h-1zM2 8h1v1h-1z" fill="#696969"/><path d="M9 3h1v1h-1zM10 4h1v4h-1zM9 8h1v1h-1zM8 9h2v1h-2zM2 9h2v1h-2zM4 10h4v1h-4z" fill="#e3e3e3"/><path d="M4 2h4v1h-4zM3 3h6v1h-6zM2 4h8v4h-8zM3 8h6v1h-6zM4 9h4v1h-4z" fill="#ffffff"/><rect x="4" y="5" width="4" height="2" fill="#000"/><rect x="5" y="4" width="2" height="4" fill="#000"/></svg>
<span class="g" style="left:687.90px;top:543px;line-height:14px;height:14px;font-size:12px;color:#000;transform:scaleX(0.8640);text-shadow:0 0 0 rgba(0,0,0,.5);">Amplitude</span>
<span class="g" style="left:516.40px;top:565px;line-height:14px;height:14px;font-size:12px;color:#000;transform:scaleX(0.8592);text-shadow:0 0 0 rgba(0,0,0,.5);">Start (Vp)</span>
<div style="left:591px;top:563px;width:76px;height:17px;background:#ffffff;"></div>
<div style="left:589px;top:561px;width:79px;height:1px;background:#a0a0a0;"></div>
<div style="left:589px;top:561px;width:1px;height:20px;background:#a0a0a0;"></div>
<div style="left:589px;top:581px;width:80px;height:1px;background:#ffffff;"></div>
<div style="left:668px;top:561px;width:1px;height:21px;background:#ffffff;"></div>
<div style="left:590px;top:562px;width:77px;height:1px;background:#696969;"></div>
<div style="left:590px;top:562px;width:1px;height:18px;background:#696969;"></div>
<div style="left:590px;top:580px;width:78px;height:1px;background:#e3e3e3;"></div>
<div style="left:667px;top:562px;width:1px;height:19px;background:#e3e3e3;"></div>
<span class="g" style="left:591.90px;top:564px;line-height:14px;height:14px;font-size:12px;color:#000;transform:scaleX(0.8800);text-shadow:0 0 0 rgba(0,0,0,.5);">0.707</span>
<div style="left:672px;top:563px;width:76px;height:17px;background:#f0f0f0;"></div>
<div style="left:670px;top:561px;width:79px;height:1px;background:#a0a0a0;"></div>
<div style="left:670px;top:561px;width:1px;height:20px;background:#a0a0a0;"></div>
<div style="left:670px;top:581px;width:80px;height:1px;background:#ffffff;"></div>
<div style="left:749px;top:561px;width:1px;height:21px;background:#ffffff;"></div>
<div style="left:671px;top:562px;width:77px;height:1px;background:#696969;"></div>
<div style="left:671px;top:562px;width:1px;height:18px;background:#696969;"></div>
<div style="left:671px;top:580px;width:78px;height:1px;background:#e3e3e3;"></div>
<div style="left:748px;top:562px;width:1px;height:19px;background:#e3e3e3;"></div>
<span class="g" style="left:673.40px;top:564px;line-height:14px;height:14px;font-size:12px;color:#6d6d6d;transform:scaleX(0.8800);text-shadow:0 0 0 rgba(109,109,109,.5);">0</span>
<span class="g" style="left:516.40px;top:587px;line-height:14px;height:14px;font-size:12px;color:#000;transform:scaleX(0.8681);text-shadow:0 0 0 rgba(0,0,0,.5);">End (Vp)</span>
<div style="left:591px;top:586px;width:76px;height:17px;background:#ffffff;"></div>
<div style="left:589px;top:584px;width:79px;height:1px;background:#a0a0a0;"></div>
<div style="left:589px;top:584px;width:1px;height:20px;background:#a0a0a0;"></div>
<div style="left:589px;top:604px;width:80px;height:1px;background:#ffffff;"></div>
<div style="left:668px;top:584px;width:1px;height:21px;background:#ffffff;"></div>
<div style="left:590px;top:585px;width:77px;height:1px;background:#696969;"></div>
<div style="left:590px;top:585px;width:1px;height:18px;background:#696969;"></div>
<div style="left:590px;top:603px;width:78px;height:1px;background:#e3e3e3;"></div>
<div style="left:667px;top:585px;width:1px;height:19px;background:#e3e3e3;"></div>
<span class="g" style="left:591.90px;top:587px;line-height:14px;height:14px;font-size:12px;color:#000;transform:scaleX(0.8800);text-shadow:0 0 0 rgba(0,0,0,.5);">1</span>
<div style="left:672px;top:586px;width:76px;height:17px;background:#f0f0f0;"></div>
<div style="left:670px;top:584px;width:79px;height:1px;background:#a0a0a0;"></div>
<div style="left:670px;top:584px;width:1px;height:20px;background:#a0a0a0;"></div>
<div style="left:670px;top:604px;width:80px;height:1px;background:#ffffff;"></div>
<div style="left:749px;top:584px;width:1px;height:21px;background:#ffffff;"></div>
<div style="left:671px;top:585px;width:77px;height:1px;background:#696969;"></div>
<div style="left:671px;top:585px;width:1px;height:18px;background:#696969;"></div>
<div style="left:671px;top:603px;width:78px;height:1px;background:#e3e3e3;"></div>
<div style="left:748px;top:585px;width:1px;height:19px;background:#e3e3e3;"></div>
<span class="g" style="left:673.40px;top:587px;line-height:14px;height:14px;font-size:12px;color:#6d6d6d;transform:scaleX(0.8800);text-shadow:0 0 0 rgba(109,109,109,.5);">1</span>
<div style="left:515px;top:618px;width:9px;height:9px;background:#ffffff;"></div>
<div style="left:513px;top:616px;width:12px;height:1px;background:#a0a0a0;"></div>
<div style="left:513px;top:616px;width:1px;height:12px;background:#a0a0a0;"></div>
<div style="left:513px;top:628px;width:13px;height:1px;background:#ffffff;"></div>
<div style="left:525px;top:616px;width:1px;height:13px;background:#ffffff;"></div>
<div style="left:514px;top:617px;width:10px;height:1px;background:#696969;"></div>
<div style="left:514px;top:617px;width:1px;height:10px;background:#696969;"></div>
<div style="left:514px;top:627px;width:11px;height:1px;background:#e3e3e3;"></div>
<div style="left:524px;top:617px;width:1px;height:11px;background:#e3e3e3;"></div>
<span class="g" style="left:531.40px;top:616px;line-height:14px;height:14px;font-size:12px;color:#000;transform:scaleX(0.8820);text-shadow:0 0 0 rgba(0,0,0,.5);">+Reverse</span>
<svg style="left:589px;top:610px" width="12" height="12" viewBox="0 0 12 12" shape-rendering="crispEdges"><path d="M4 0h4v1h-4zM2 1h2v1h-2zM8 1h2v1h-2zM1 2h1v2h-1zM0 4h1v4h-1zM1 8h1v2h-1z" fill="#a0a0a0"/><path d="M10 2h1v2h-1zM11 4h1v4h-1zM10 8h1v2h-1zM8 10h2v1h-2zM2 10h2v1h-2zM4 11h4v1h-4z" fill="#ffffff"/><path d="M4 1h4v1h-4zM2 2h2v1h-2zM8 2h2v1h-2zM2 3h1v1h-1zM1 4h1v4h-1zM2 8h1v1h-1z" fill="#696969"/><path d="M9 3h1v1h-1zM10 4h1v4h-1zM9 8h1v1h-1zM8 9h2v1h-2zM2 9h2v1h-2zM4 10h4v1h-4z" fill="#e3e3e3"/><path d="M4 2h4v1h-4zM3 3h6v1h-6zM2 4h8v4h-8zM3 8h6v1h-6zM4 9h4v1h-4z" fill="#ffffff"/><rect x="4" y="5" width="4" height="2" fill="#000"/><rect x="5" y="4" width="2" height="4" fill="#000"/></svg>
<span class="g" style="left:605.90px;top:610px;line-height:14px;height:14px;font-size:12px;color:#000;transform:scaleX(0.8723);text-shadow:0 0 0 rgba(0,0,0,.5);">Linear</span>
<svg style="left:589px;top:624px" width="12" height="12" viewBox="0 0 12 12" shape-rendering="crispEdges"><path d="M4 0h4v1h-4zM2 1h2v1h-2zM8 1h2v1h-2zM1 2h1v2h-1zM0 4h1v4h-1zM1 8h1v2h-1z" fill="#a0a0a0"/><path d="M10 2h1v2h-1zM11 4h1v4h-1zM10 8h1v2h-1zM8 10h2v1h-2zM2 10h2v1h-2zM4 11h4v1h-4z" fill="#ffffff"/><path d="M4 1h4v1h-4zM2 2h2v1h-2zM8 2h2v1h-2zM2 3h1v1h-1zM1 4h1v4h-1zM2 8h1v1h-1z" fill="#696969"/><path d="M9 3h1v1h-1zM10 4h1v4h-1zM9 8h1v1h-1zM8 9h2v1h-2zM2 9h2v1h-2zM4 10h4v1h-4z" fill="#e3e3e3"/><path d="M4 2h4v1h-4zM3 3h6v1h-6zM2 4h8v4h-8zM3 8h6v1h-6zM4 9h4v1h-4z" fill="#ffffff"/></svg>
<span class="g" style="left:605.90px;top:624px;line-height:14px;height:14px;font-size:12px;color:#000;transform:scaleX(0.9293);text-shadow:0 0 0 rgba(0,0,0,.5);">Log</span>
<svg style="left:670px;top:610px" width="12" height="12" viewBox="0 0 12 12" shape-rendering="crispEdges"><path d="M4 0h4v1h-4zM2 1h2v1h-2zM8 1h2v1h-2zM1 2h1v2h-1zM0 4h1v4h-1zM1 8h1v2h-1z" fill="#a0a0a0"/><path d="M10 2h1v2h-1zM11 4h1v4h-1zM10 8h1v2h-1zM8 10h2v1h-2zM2 10h2v1h-2zM4 11h4v1h-4z" fill="#ffffff"/><path d="M4 1h4v1h-4zM2 2h2v1h-2zM8 2h2v1h-2zM2 3h1v1h-1zM1 4h1v4h-1zM2 8h1v1h-1z" fill="#696969"/><path d="M9 3h1v1h-1zM10 4h1v4h-1zM9 8h1v1h-1zM8 9h2v1h-2zM2 9h2v1h-2zM4 10h4v1h-4z" fill="#e3e3e3"/><path d="M4 2h4v1h-4zM3 3h6v1h-6zM2 4h8v4h-8zM3 8h6v1h-6zM4 9h4v1h-4z" fill="#f0f0f0"/><rect x="4" y="5" width="4" height="2" fill="#a0a0a0"/><rect x="5" y="4" width="2" height="4" fill="#a0a0a0"/></svg>
<span class="g" style="left:687.40px;top:610px;line-height:14px;height:14px;font-size:12px;color:#a0a0a0;transform:scaleX(0.8573);text-shadow:0 0 0 rgba(160,160,160,.5),1px 1px 0 #fff;">Linear</span>
<svg style="left:670px;top:624px" width="12" height="12" viewBox="0 0 12 12" shape-rendering="crispEdges"><path d="M4 0h4v1h-4zM2 1h2v1h-2zM8 1h2v1h-2zM1 2h1v2h-1zM0 4h1v4h-1zM1 8h1v2h-1z" fill="#a0a0a0"/><path d="M10 2h1v2h-1zM11 4h1v4h-1zM10 8h1v2h-1zM8 10h2v1h-2zM2 10h2v1h-2zM4 11h4v1h-4z" fill="#ffffff"/><path d="M4 1h4v1h-4zM2 2h2v1h-2zM8 2h2v1h-2zM2 3h1v1h-1zM1 4h1v4h-1zM2 8h1v1h-1z" fill="#696969"/><path d="M9 3h1v1h-1zM10 4h1v4h-1zM9 8h1v1h-1zM8 9h2v1h-2zM2 9h2v1h-2zM4 10h4v1h-4z" fill="#e3e3e3"/><path d="M4 2h4v1h-4zM3 3h6v1h-6zM2 4h8v4h-8zM3 8h6v1h-6zM4 9h4v1h-4z" fill="#f0f0f0"/></svg>
<span class="g" style="left:687.40px;top:624px;line-height:14px;height:14px;font-size:12px;color:#a0a0a0;transform:scaleX(0.8893);text-shadow:0 0 0 rgba(160,160,160,.5),1px 1px 0 #fff;">Log</span>
<div style="left:590px;top:56px;width:164px;height:1px;background:linear-gradient(to right, rgba(0,0,0,0), rgba(0,0,0,0.32) 7px, rgba(0,0,0,0.32));"></div>
<div style="left:591px;top:57px;width:163px;height:1px;background:linear-gradient(to right, rgba(0,0,0,0), rgba(0,0,0,0.2) 7px, rgba(0,0,0,0.2));"></div>
<div style="left:592px;top:58px;width:162px;height:1px;background:linear-gradient(to right, rgba(0,0,0,0), rgba(0,0,0,0.1) 7px, rgba(0,0,0,0.1));"></div>
<div style="left:593px;top:59px;width:161px;height:1px;background:linear-gradient(to right, rgba(0,0,0,0), rgba(0,0,0,0.04) 7px, rgba(0,0,0,0.04));"></div>
<div style="left:588px;top:38px;width:166px;height:18px;background:#ffffe1;border-top:1px solid #000;border-bottom:1px solid #000;border-left:1px solid #000;box-sizing:border-box;"></div>
<span style="left:589.50px;top:39px;line-height:15px;height:15px;font-size:13px;color:#000;transform:scaleX(0.8917);">Signal Generator-Speakers/Hea</span>
<div style="left:754px;top:0px;width:8px;height:652px;background:#ffffff;"></div>
</div></body></html>
